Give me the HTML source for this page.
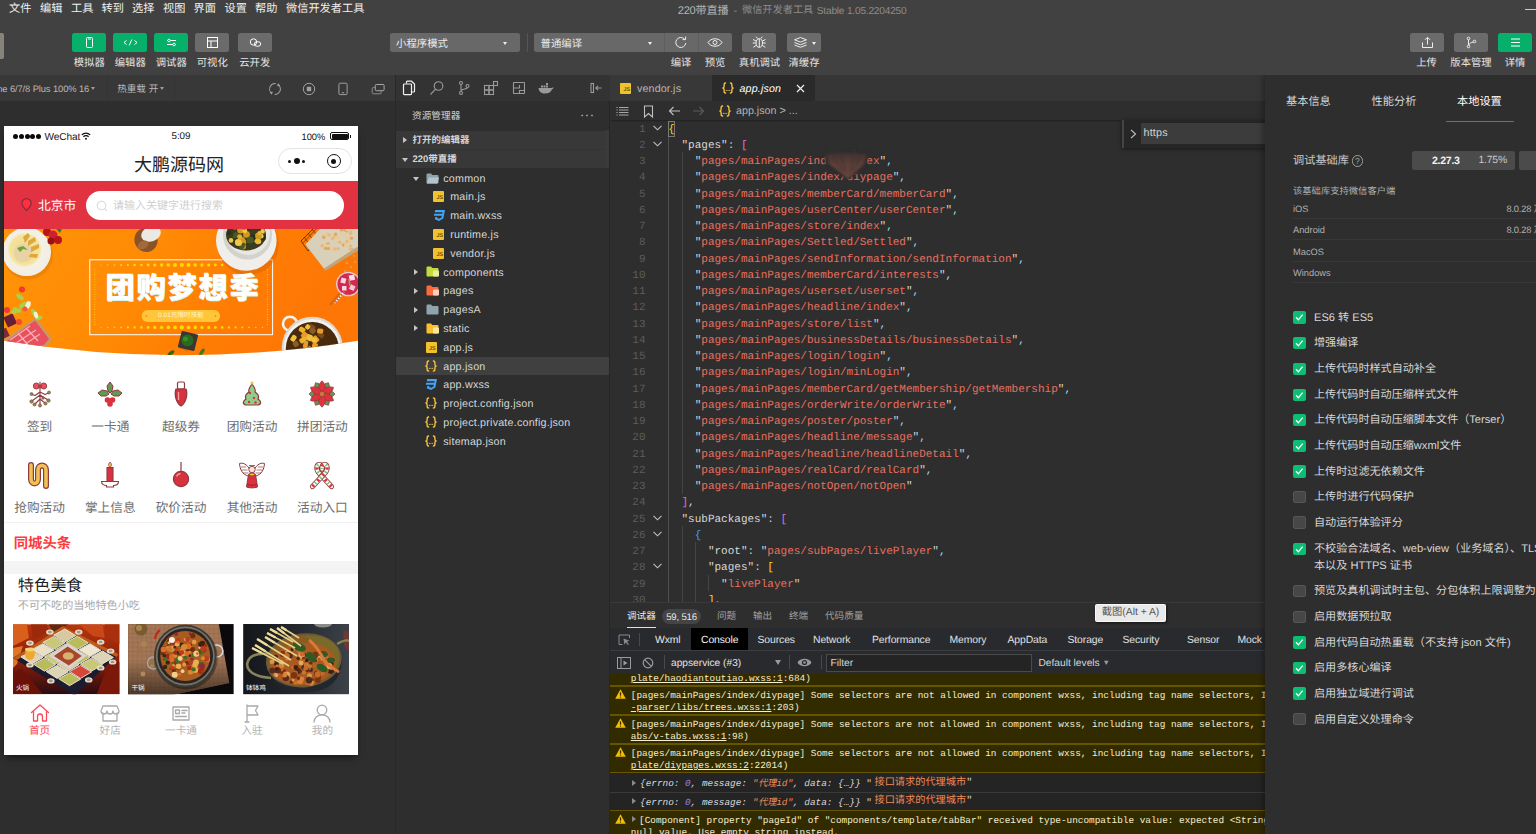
<!DOCTYPE html><html><head><meta charset="utf-8"><title>x</title><style>
*{box-sizing:border-box;margin:0;padding:0}
html,body{width:1536px;height:834px;overflow:hidden;background:#2e2e2e}
body{font-family:"Liberation Sans","Noto Sans CJK SC",sans-serif;color:#ddd;position:relative;font-size:10.4px;text-rendering:geometricPrecision}
.a{position:absolute}
.t{position:absolute;white-space:nowrap;line-height:1}
.mono{font-family:"Liberation Mono",monospace}
#top{left:0;top:0;width:1536px;height:75px;background:#414141}
.menu{top:4.300px;font-size:11.2px;color:#f0f0f0}
.tb{top:33px;height:19px;width:34.2px;border-radius:2.5px;background:#6b6b6b}
.tb.g{background:#07b06a}
.tl{top:58.500px;font-size:10.35px;color:#e6e6e6;text-align:center;width:60px}
svg{position:absolute;overflow:visible}
.cj{font-family:"Liberation Sans","Noto Sans CJK SC",sans-serif}</style></head><body>
<div class="a" id="top"></div>
<div class="t menu" style="left:9px"><span class="cj">文件</span></div>
<div class="t menu" style="left:40px"><span class="cj">编辑</span></div>
<div class="t menu" style="left:71px"><span class="cj">工具</span></div>
<div class="t menu" style="left:101.5px"><span class="cj">转到</span></div>
<div class="t menu" style="left:132px"><span class="cj">选择</span></div>
<div class="t menu" style="left:163px"><span class="cj">视图</span></div>
<div class="t menu" style="left:193.5px"><span class="cj">界面</span></div>
<div class="t menu" style="left:224.5px"><span class="cj">设置</span></div>
<div class="t menu" style="left:255px"><span class="cj">帮助</span></div>
<div class="t menu" style="left:286px"><span class="cj">微信开发者工具</span></div>
<div class="t" style="left:677.800px;top:5.800px;font-size:11.100px;color:#b4b4b4"><span style="letter-spacing:-0.300px">220</span><span class="cj">带直播</span></div>
<div class="t" style="left:733.500px;top:6px;font-size:10.900px;color:#8c8c8c">-</div>
<div class="t" style="left:742px;top:6.400px;font-size:10.200px;color:#8c8c8c"><span class="cj">微信开发者工具</span></div>
<div class="t" style="left:816.800px;top:6.600px;font-size:10.200px;color:#8c8c8c;letter-spacing:-0.230px">Stable 1.05.2204250</div>
<div class="a" style="left:1525px;top:9px;width:11px;height:1px;background:#ccc"></div>
<div class="a" style="left:0;top:33px;width:3.5px;height:26px;background:#85837a;border-radius:0 2px 2px 0"></div>
<div class="a tb g" style="left:72px"></div>
<div class="t tl" style="left:59.25px"><span class="cj">模拟器</span></div>
<div class="a tb g" style="left:113px"></div>
<div class="t tl" style="left:100.25px"><span class="cj">编辑器</span></div>
<div class="a tb g" style="left:154px"></div>
<div class="t tl" style="left:141.25px"><span class="cj">调试器</span></div>
<div class="a tb " style="left:195px"></div>
<div class="t tl" style="left:182.25px"><span class="cj">可视化</span></div>
<div class="a tb " style="left:237.5px"></div>
<div class="t tl" style="left:224.75px"><span class="cj">云开发</span></div>
<svg style="left:72px;top:33px" width="35" height="19" viewBox="0 0 35 19" fill="none" stroke="#fff" stroke-width="1"><rect x="14.5" y="4.5" width="6" height="10" rx="1"></rect><path d="M16 6h3"></path></svg>
<svg style="left:113px;top:33px" width="35" height="19" viewBox="0 0 35 19" fill="none" stroke="#fff" stroke-width="1"><path d="M13.5 7.5l-2.5 2 2.5 2M21.5 7.5l2.5 2-2.5 2M18.8 6.5l-2.6 6"></path></svg>
<svg style="left:154px;top:33px" width="35" height="19" viewBox="0 0 35 19" fill="none" stroke="#fff" stroke-width="1"><path d="M13 7.5h9M13 11.5h9"></path><circle cx="15" cy="7.5" r="1.3" fill="#07b06a"></circle><circle cx="20" cy="11.5" r="1.3" fill="#07b06a"></circle></svg>
<svg style="left:195px;top:33px" width="35" height="19" viewBox="0 0 35 19" fill="none" stroke="#fff" stroke-width="1"><rect x="12.5" y="4.5" width="10" height="10"></rect><path d="M12.5 8h10M16 8v6.5"></path></svg>
<svg style="left:237.5px;top:33px" width="35" height="19" viewBox="0 0 35 19" fill="none" stroke="#fff" stroke-width="1"><circle cx="15.5" cy="9" r="3.2"></circle><ellipse cx="19.5" cy="11" rx="3.3" ry="2.3"></ellipse></svg>
<div class="a" style="left:389.5px;top:33px;width:130px;height:19px;border-radius:2.5px;background:#686868"></div>
<div class="t" style="left:396px;top:39.800px;font-size:10.4px;color:#ececec"><span class="cj">小程序模式</span></div>
<div class="a" style="left:503px;top:42px;border:2.5px solid transparent;border-top:3px solid #eee"></div>
<div class="a" style="left:526.5px;top:33px;width:1px;height:19px;background:#555"></div>
<div class="a" style="left:534px;top:33px;width:198px;height:19px;border-radius:2.5px;background:#686868"></div>
<div class="t" style="left:540.5px;top:39.800px;font-size:10.4px;color:#ececec"><span class="cj">普通编译</span></div>
<div class="a" style="left:647.5px;top:42px;border:2.5px solid transparent;border-top:3px solid #eee"></div>
<div class="a" style="left:664px;top:33px;width:1px;height:19px;background:#5e5e5e"></div>
<div class="a" style="left:698px;top:33px;width:1px;height:19px;background:#5e5e5e"></div>
<svg style="left:664px;top:33px" width="34" height="19" viewBox="0 0 34 19" fill="none" stroke="#eee" stroke-width="1"><path d="M20.6 6.2A5 5 0 1 0 21.8 10"></path><path d="M21.6 3.6v3h-3"></path></svg>
<svg style="left:698px;top:33px" width="34" height="19" viewBox="0 0 34 19" fill="none" stroke="#eee" stroke-width="1"><path d="M10 9.5c3-5 11-5 14 0c-3 5-11 5-14 0z"></path><circle cx="17" cy="9.5" r="2"></circle></svg>
<div class="t tl" style="left:651px"><span class="cj">编译</span></div>
<div class="t tl" style="left:685px"><span class="cj">预览</span></div>
<div class="a tb" style="left:742px"></div>
<svg style="left:742px;top:33px" width="35" height="19" viewBox="0 0 35 19" fill="none" stroke="#eee" stroke-width="1"><ellipse cx="17.3" cy="10" rx="3.2" ry="4.3"></ellipse><path d="M17.3 5.7v8.6M15.5 5.5l-1.3-1.8M19 5.5l1.3-1.8M14 8l-3-1.5M20.5 8l3-1.5M14 10h-3.3M20.5 10h3.3M14.3 12.3l-3 2M20.3 12.3l3 2"></path></svg>
<div class="t tl" style="left:729.5px"><span class="cj">真机调试</span></div>
<div class="a tb" style="left:786.5px"></div>
<svg style="left:786.5px;top:33px" width="35" height="19" viewBox="0 0 35 19" fill="none" stroke="#eee" stroke-width="1"><path d="M13.5 4.5l6 2.3-6 2.3-6-2.3zM7.5 9.5l6 2.3 6-2.3M7.5 12l6 2.3 6-2.3"></path></svg>
<div class="a" style="left:811.5px;top:42px;border:2.5px solid transparent;border-top:3px solid #eee"></div>
<div class="t tl" style="left:774px"><span class="cj">清缓存</span></div>
<div class="a tb" style="left:1409.5px"></div>
<svg style="left:1409.5px;top:33px" width="35" height="19" viewBox="0 0 35 19" fill="none" stroke="#eee" stroke-width="1"><path d="M12.5 9.5v5h10v-5M17.5 11.5v-7M15 6.8l2.5-2.5 2.5 2.5"></path></svg>
<div class="t tl" style="left:1396.5px"><span class="cj">上传</span></div>
<div class="a tb" style="left:1454px"></div>
<svg style="left:1454px;top:33px" width="35" height="19" viewBox="0 0 35 19" fill="none" stroke="#eee" stroke-width="1"><circle cx="14.5" cy="5.5" r="1.3"></circle><circle cx="14.5" cy="13.5" r="1.3"></circle><circle cx="20.5" cy="8.5" r="1.3"></circle><path d="M14.5 6.8v5.4M14.7 12.2c.5-2 2.5-2.6 4.6-3.2"></path></svg>
<div class="t tl" style="left:1441px"><span class="cj">版本管理</span></div>
<div class="a tb g" style="left:1498px"></div>
<svg style="left:1498px;top:33px" width="35" height="19" viewBox="0 0 35 19" fill="none" stroke="#fff" stroke-width="1.2"><path d="M13 6h9M13 9.5h9M13 13h9"></path></svg>
<div class="t tl" style="left:1485px"><span class="cj">详情</span></div>
<div class="a" style="left:0;top:75px;width:395px;height:26px;background:#383838"></div>
<div class="a" style="left:106.5px;top:75px;width:1px;height:26px;background:#343434"></div>
<div class="t" style="left:-2.800px;top:84.500px;font-size:9.350px;color:#b8b8b8;letter-spacing:-0.100px">ne 6/7/8 Plus 100% 16</div>
<div class="a" style="left:91px;top:86.800px;border:2.700px solid transparent;border-top:3.800px solid #9c9c9c;border-bottom:0"></div>
<div class="t" style="left:117.200px;top:84.500px;font-size:9.600px;color:#b8b8b8"><span class="cj">热重载</span> <span class="cj">开</span></div>
<div class="a" style="left:159.500px;top:86.800px;border:2.700px solid transparent;border-top:3.800px solid #9c9c9c;border-bottom:0"></div>
<div class="a" style="left:174px;top:75px;width:1px;height:26px;background:#343434"></div>
<svg style="left:268.300px;top:82.100px" width="14" height="14" viewBox="0 0 14 14" fill="none" stroke="#a0a0a0" stroke-width="1"><circle cx="7" cy="7" r="5.400" stroke-dasharray="14.200 2.760" transform="rotate(-62 7 7)"></circle><path d="M10.600 1.300l1.400 2.700-3 .3z" fill="#a0a0a0" stroke="none"></path><path d="M3.400 12.700l-1.400-2.700 3-.3z" fill="#a0a0a0" stroke="none"></path></svg>
<svg style="left:302.100px;top:82.100px" width="14" height="14" viewBox="0 0 14 14" fill="none" stroke="#a0a0a0" stroke-width="1"><circle cx="7" cy="7" r="5.700"></circle><rect x="4.800" y="4.800" width="4.400" height="4.400" rx="0.800" fill="#a0a0a0" stroke="none"></rect></svg>
<svg style="left:336.400px;top:82px" width="14" height="14" viewBox="0 0 14 14" fill="none" stroke="#a0a0a0" stroke-width="1"><rect x="2.900" y="1.200" width="8.200" height="11.400" rx="1.200"></rect><path d="M5.800 10.700h2.400"></path></svg>
<svg style="left:369.500px;top:82px" width="16" height="14" viewBox="0 0 16 14" fill="none" stroke-width="1"><rect x="5.300" y="2.500" width="8.800" height="6.200" rx="1" stroke="#a8a8a8"></rect><path d="M5.300 5.600H3.200a1 1 0 0 0-1 1v4.200a1 1 0 0 0 1 1h6.900a1 1 0 0 0 1-1V8.700" stroke="#8c8c8c"></path></svg>
<div class="a" id="ph" style="left:4px;top:126px;width:354px;height:629px;background:#fff;box-shadow:0 4px 7px -2px rgba(0,0,0,.55);overflow:hidden;color:#222">
<div class="a" style="left:9.10px;top:8px;width:5.1px;height:5.1px;border-radius:3px;background:#0a0a0a"></div><div class="a" style="left:14.85px;top:8px;width:5.1px;height:5.1px;border-radius:3px;background:#0a0a0a"></div><div class="a" style="left:20.60px;top:8px;width:5.1px;height:5.1px;border-radius:3px;background:#0a0a0a"></div><div class="a" style="left:26.35px;top:8px;width:5.1px;height:5.1px;border-radius:3px;background:#0a0a0a"></div><div class="a" style="left:32.10px;top:8px;width:5.1px;height:5.1px;border-radius:3px;background:#0a0a0a"></div>
<div class="t" style="left:40.600px;top:6.700px;font-size:10.100px;color:#222;letter-spacing:-0.100px">WeChat</div>
<svg style="left:77.300px;top:6px" width="10" height="8" viewBox="0 0 11 9" fill="none" stroke="#111" stroke-width="1.500"><path d="M0.800 3.200a6.600 6.600 0 0 1 9.400 0M2.600 5.300a4 4 0 0 1 5.800 0"></path><circle cx="5.500" cy="7.500" r="1.100" fill="#111" stroke="none"></circle></svg>
<div class="t" style="left:147px;top:6px;width:60px;text-align:center;font-size:9.8px;color:#111">5:09</div>
<div class="t" style="left:297.5px;top:6.500px;font-size:9.3px;color:#111">100%</div>
<div class="a" style="left:326px;top:6px;width:19px;height:8px;border:1px solid #111;border-radius:2px"></div><div class="a" style="left:327.5px;top:7.5px;width:16px;height:5px;background:#111;border-radius:1px"></div><div class="a" style="left:345.5px;top:8.5px;width:1.5px;height:3px;background:#111"></div>
<div class="t" style="left:75px;top:29.800px;width:200px;text-align:center;font-size:18px;color:#222"><span class="cj">大鹏源码网</span></div>
<div class="a" style="left:274px;top:21.5px;width:74px;height:26px;border:1px solid #e3e3e3;border-radius:13.5px"></div>
<div class="a" style="left:284px;top:33.5px;width:3px;height:3px;border-radius:2px;background:#111"></div><div class="a" style="left:289.5px;top:32px;width:6px;height:6px;border-radius:3px;background:#111"></div><div class="a" style="left:298px;top:33.5px;width:3px;height:3px;border-radius:2px;background:#111"></div>
<div class="a" style="left:322.5px;top:28px;width:14px;height:14px;border-radius:7px;border:1.6px solid #111"></div><div class="a" style="left:327px;top:32.5px;width:5px;height:5px;border-radius:3px;background:#111"></div>
<div class="a" style="left:0;top:55.3px;width:354px;height:48px;background:#e23242"></div>
<svg style="left:16.5px;top:71.5px" width="11" height="13" viewBox="0 0 11 13"><path d="M5.5 0.6a4.6 4.6 0 0 1 4.6 4.6c0 3-4.6 7.2-4.6 7.2S0.9 8.2 0.9 5.2A4.6 4.6 0 0 1 5.5 0.6z" fill="#ff3040" stroke="#8a2c3c" stroke-width="1.300"></path></svg>
<div class="t" style="left:34px;top:73.500px;font-size:12.8px;color:#fff"><span class="cj">北京市</span></div>
<div class="a" style="left:82.3px;top:64.6px;width:258px;height:29px;border-radius:14.5px;background:#fff"></div>
<svg style="left:91.5px;top:74px" width="12" height="12" viewBox="0 0 12 12" fill="none" stroke="#d4dae2" stroke-width="1.100"><circle cx="5.5" cy="5.5" r="4.3"></circle><path d="M8.6 8.6l2.3 2.3"></path></svg>
<div class="t" style="left:109px;top:75.200px;font-size:11px;color:#cfcfcf"><span class="cj">请输入关键字进行搜索</span></div>
<svg style="left:0;top:103px" width="354" height="130" viewBox="0 0 354 130"><defs><linearGradient id="bg1" x1="0" y1="0" x2="1" y2="0.25"><stop offset="0" stop-color="#ff9408"></stop><stop offset="0.45" stop-color="#ff8a04"></stop><stop offset="0.75" stop-color="#ff7c04"></stop><stop offset="1" stop-color="#fd7606"></stop></linearGradient><radialGradient id="pl1" cx="0.46" cy="0.46" r="0.5"><stop offset="0" stop-color="#ecd694"></stop><stop offset="0.6" stop-color="#f4e39a"></stop><stop offset="0.72" stop-color="#f4f0e4"></stop><stop offset="1" stop-color="#f1eee6"></stop></radialGradient><clipPath id="bc"><path d="M0 0H354V111.7Q177 140.7 0 111.7Z"></path></clipPath></defs><g clip-path="url(#bc)"><rect width="354" height="130" fill="url(#bg1)"></rect><circle cx="24" cy="25.500" r="25" fill="#e07800" opacity=".5"></circle><circle cx="22.700" cy="22.700" r="24.300" fill="url(#pl1)"></circle><path d="M10 22q2-8 10-7q6 0 8 6q3 6-2 10q-6 4-12 1q-5-4-4-10z" fill="#e9d2a4"></path><path d="M19 8l5-4 2 3-5 7zM24 12l7-4 1 4-8 5zM27 18l8-3 0 4-8 4zM26 25l8 0-1 4-8-1z" fill="#dfa83a"></path><path d="M13 19l6-2 5 4-5-1-3 3z" fill="#6aa53a"></path><circle cx="43" cy="3" r="4" fill="#b8141e"></circle><circle cx="49" cy="6" r="4.500" fill="#d02030"></circle><circle cx="54" cy="11" r="4" fill="#b8141e"></circle><circle cx="47" cy="12" r="3.500" fill="#96101a"></circle><path d="M52 0l6 0-2 4z" fill="#3c7a2a"></path><ellipse cx="142" cy="11" rx="11.500" ry="12" fill="#8a5228" transform="rotate(-30 142 11)"></ellipse><ellipse cx="147" cy="5" rx="10" ry="7.500" fill="#ece8e2" transform="rotate(-20 147 5)"></ellipse><ellipse cx="139" cy="16" rx="6" ry="4" fill="#a06a3a" transform="rotate(-30 139 16)"></ellipse><rect x="85.800" y="30.800" width="182.800" height="74.900" fill="none" stroke="#fff" stroke-width="1"></rect><circle cx="244" cy="15" r="31" fill="#d86400" opacity=".45"></circle><circle cx="242.300" cy="11.400" r="30.300" fill="#f0eeea"></circle><circle cx="243.500" cy="6" r="24.500" fill="#d4d2cc"></circle><circle cx="244" cy="4" r="22" fill="#e8e6e2"></circle><ellipse cx="242" cy="6" rx="20" ry="15.500" fill="#3a3a1e"></ellipse><circle cx="230.9" cy="-2.8" r="3.2" fill="#e8b838"></circle><circle cx="240.9" cy="-7.5" r="1.9" fill="#2a301a"></circle><circle cx="243.5" cy="-1.4" r="1.9" fill="#d09a20"></circle><circle cx="251.3" cy="10.8" r="2.2" fill="#c8a02a"></circle><circle cx="249.2" cy="8.9" r="3.1" fill="#2a301a"></circle><circle cx="238.8" cy="17.2" r="3.2" fill="#d09a20"></circle><circle cx="242.4" cy="1.5" r="2.9" fill="#2a301a"></circle><circle cx="242.5" cy="5.4" r="3.4" fill="#d09a20"></circle><circle cx="244.6" cy="-7.6" r="2.1" fill="#d09a20"></circle><circle cx="237.7" cy="17.4" r="2.8" fill="#4a5a22"></circle><circle cx="236.6" cy="1.1" r="3.5" fill="#d09a20"></circle><circle cx="258.6" cy="2.4" r="2.3" fill="#f0c84a"></circle><circle cx="227.0" cy="11.4" r="2.3" fill="#f0c84a"></circle><circle cx="237.6" cy="14.6" r="1.8" fill="#4a5a22"></circle><circle cx="240.8" cy="1.8" r="2.4" fill="#f0c84a"></circle><circle cx="232.0" cy="5.9" r="2.7" fill="#4a5a22"></circle><circle cx="246.1" cy="10.9" r="3.5" fill="#4a5a22"></circle><circle cx="234.8" cy="11.4" r="2.8" fill="#2a301a"></circle><circle cx="232.9" cy="12.4" r="1.8" fill="#e0b030"></circle><circle cx="238.3" cy="-4.9" r="3.5" fill="#e0b030"></circle><circle cx="242.6" cy="-7.5" r="3.5" fill="#f0c84a"></circle><circle cx="225.0" cy="4.0" r="2.3" fill="#2a301a"></circle><circle cx="254.1" cy="12.1" r="3.2" fill="#e8b838"></circle><circle cx="238.6" cy="13.2" r="3.6" fill="#d09a20"></circle><circle cx="234.4" cy="13.6" r="3.5" fill="#f0c84a"></circle><circle cx="239.6" cy="15.8" r="2.0" fill="#4a5a22"></circle><circle cx="238.9" cy="10.0" r="1.9" fill="#d09a20"></circle><circle cx="240.2" cy="-2.1" r="2.7" fill="#4a5a22"></circle><circle cx="259.1" cy="8.9" r="2.8" fill="#2a301a"></circle><circle cx="257.2" cy="7.2" r="2.4" fill="#f0c84a"></circle><circle cx="230.8" cy="7.3" r="1.9" fill="#4a5a22"></circle><circle cx="254.4" cy="6.9" r="3.3" fill="#d09a20"></circle><circle cx="255.4" cy="3.9" r="2.0" fill="#e8b838"></circle><circle cx="235.7" cy="7.8" r="2.5" fill="#e0b030"></circle><path d="M297 12L311 -2L325 -2L304 22Z" fill="none" stroke="#4a2a0a" stroke-width="0.800"></path><path d="M299 14l14-15M302 17l15-17M300 8l6 8M304 4l6 8M308 0l6 8" stroke="#4a2a0a" stroke-width="0.600"></path><path d="M301.400 15.400L316.800 -1L355 -1L355 17L320 39.700Z" fill="#d9d0ba"></path><path d="M320 39.700L355 17L355 21L321 42Z" fill="#b8a888"></path><circle cx="332.8" cy="8.2" r="1.700" fill="#e8b878"></circle><circle cx="324.0" cy="14.9" r="1.700" fill="#dca862"></circle><circle cx="334.1" cy="19.8" r="1.700" fill="#e8b878"></circle><circle cx="328.7" cy="20.6" r="1.700" fill="#f0c890"></circle><circle cx="319.3" cy="8.3" r="1.700" fill="#f0c890"></circle><circle cx="348.3" cy="20.9" r="1.700" fill="#dca862"></circle><circle cx="323.0" cy="5.2" r="1.700" fill="#e8b878"></circle><circle cx="322.2" cy="19.2" r="1.700" fill="#f0c890"></circle><circle cx="320.0" cy="15.1" r="1.700" fill="#f0c890"></circle><circle cx="346.4" cy="20.2" r="1.700" fill="#e8b878"></circle><circle cx="339.6" cy="16.0" r="1.700" fill="#dca862"></circle><circle cx="346.5" cy="17.0" r="1.700" fill="#e8b878"></circle><circle cx="330.7" cy="7.5" r="1.700" fill="#e8b878"></circle><circle cx="324.4" cy="19.5" r="1.700" fill="#dca862"></circle><circle cx="319.8" cy="8.3" r="1.700" fill="#dca862"></circle><circle cx="322.5" cy="5.2" r="1.700" fill="#f0c890"></circle><circle cx="347.0" cy="2.5" r="1.700" fill="#f0c890"></circle><circle cx="318.1" cy="16.8" r="1.700" fill="#e8b878"></circle><circle cx="346.6" cy="4.5" r="1.700" fill="#e8b878"></circle><circle cx="346.6" cy="2.9" r="1.700" fill="#e8b878"></circle><circle cx="334.0" cy="12.6" r="1.700" fill="#f0c890"></circle><circle cx="347.5" cy="9.2" r="1.700" fill="#dca862"></circle><circle cx="324.1" cy="16.8" r="1.700" fill="#f0c890"></circle><circle cx="336.6" cy="3.8" r="1.700" fill="#f0c890"></circle><circle cx="341.0" cy="0.9" r="1.700" fill="#dca862"></circle><circle cx="335.8" cy="13.3" r="1.700" fill="#e8b878"></circle><circle cx="341.8" cy="16.2" r="1.700" fill="#f0c890"></circle><circle cx="349.9" cy="2.7" r="1.700" fill="#f0c890"></circle><circle cx="330.9" cy="19.9" r="1.700" fill="#e8b878"></circle><circle cx="337.6" cy="0.9" r="1.700" fill="#dca862"></circle><circle cx="345.1" cy="11.5" r="1.700" fill="#f0c890"></circle><circle cx="342.8" cy="1.9" r="1.700" fill="#dca862"></circle><circle cx="321.5" cy="19.4" r="1.700" fill="#dca862"></circle><circle cx="332.4" cy="8.8" r="1.700" fill="#f0c890"></circle><circle cx="341.9" cy="8.3" r="1.700" fill="#f0c890"></circle><circle cx="328.5" cy="9.5" r="1.700" fill="#e8b878"></circle><circle cx="325.1" cy="5.9" r="1.700" fill="#e8b878"></circle><circle cx="327.8" cy="6.3" r="1.700" fill="#f0c890"></circle><circle cx="343.1" cy="0.6" r="1.700" fill="#f0c890"></circle><circle cx="343.8" cy="10.9" r="1.700" fill="#f0c890"></circle><circle cx="342.9" cy="12.5" r="1.700" fill="#e8b878"></circle><circle cx="331.6" cy="5.1" r="1.700" fill="#dca862"></circle><circle cx="338" cy="30" r="1.300" fill="#e0983a"></circle><circle cx="343" cy="34" r="1.300" fill="#e0983a"></circle><circle cx="350" cy="27" r="1.300" fill="#e0983a"></circle><circle cx="347" cy="38" r="1.300" fill="#e0983a"></circle><circle cx="341" cy="42" r="1.300" fill="#e0983a"></circle><circle cx="351" cy="33" r="1.300" fill="#e0983a"></circle><path d="M336 64l-10 12" stroke="#c05a10" stroke-width="2" opacity=".5"></path><circle cx="344.300" cy="55" r="12.300" fill="#e8c8cc"></circle><circle cx="344.300" cy="55" r="10.800" fill="#d42850"></circle><rect x="337" y="49" width="5" height="5" fill="#f6d8de" transform="rotate(15 339 51)"></rect><rect x="345" y="46" width="5.500" height="5.500" fill="#f8e0e4" transform="rotate(-10 347 48)"></rect><rect x="346" y="56" width="5" height="5" fill="#f2c8d0" transform="rotate(25 348 58)"></rect><rect x="338" y="57" width="4.500" height="4.500" fill="#f6d8de"></rect><path d="M345 50l1 7" stroke="#8ab83a" stroke-width="1.500"></path><path d="M340 63l-9 11" stroke="#fff" stroke-width="1.800"></path><path d="M340 63l-9 11" stroke="#e03040" stroke-width="1.800" stroke-dasharray="1.500 1.500"></path><circle cx="286" cy="94.700" r="7" fill="none" stroke="#f4f2ee" stroke-width="2.600"></circle><circle cx="308.300" cy="118.200" r="30.500" fill="#dcd8d0"></circle><circle cx="308.300" cy="118.500" r="28.500" fill="#f4f2ee"></circle><circle cx="308.300" cy="119.500" r="26.500" fill="#4a2a0c"></circle><rect x="304.0" y="124.2" width="6.6" height="7.0" rx="1.500" fill="#6a3a14" transform="rotate(39 307.0 127.2)"></rect><rect x="294.7" y="98.1" width="6.4" height="5.1" rx="1.500" fill="#f0b02a" transform="rotate(32 297.7 101.1)"></rect><rect x="307.7" y="119.5" width="5.8" height="7.0" rx="1.500" fill="#e8801a" transform="rotate(60 310.7 122.5)"></rect><rect x="308.2" y="107.0" width="6.9" height="7.2" rx="1.500" fill="#e89a2a" transform="rotate(50 311.2 110.0)"></rect><rect x="304.3" y="95.4" width="6.9" height="5.3" rx="1.500" fill="#7a4a1e" transform="rotate(29 307.3 98.4)"></rect><rect x="305.5" y="99.0" width="5.8" height="5.6" rx="1.500" fill="#8a5a2a" transform="rotate(38 308.5 102.0)"></rect><rect x="297.7" y="103.2" width="6.3" height="6.4" rx="1.500" fill="#e89a2a" transform="rotate(41 300.7 106.2)"></rect><rect x="287.1" y="106.4" width="4.9" height="6.5" rx="1.500" fill="#f0c03a" transform="rotate(32 290.1 109.4)"></rect><rect x="302.5" y="117.5" width="5.6" height="5.6" rx="1.500" fill="#e89a2a" transform="rotate(36 305.5 120.5)"></rect><rect x="298.7" y="114.5" width="6.0" height="5.2" rx="1.500" fill="#7a4a1e" transform="rotate(53 301.7 117.5)"></rect><rect x="302.6" y="105.5" width="5.8" height="6.4" rx="1.500" fill="#f0c03a" transform="rotate(23 305.6 108.5)"></rect><rect x="300.9" y="95.8" width="4.6" height="4.9" rx="1.500" fill="#f0c03a" transform="rotate(38 303.9 98.8)"></rect><rect x="312.6" y="119.7" width="7.1" height="7.2" rx="1.500" fill="#5a2e0e" transform="rotate(12 315.6 122.7)"></rect><rect x="313.2" y="103.2" width="6.6" height="4.9" rx="1.500" fill="#7a4a1e" transform="rotate(43 316.2 106.2)"></rect><rect x="309.1" y="123.2" width="6.2" height="6.3" rx="1.500" fill="#5a2e0e" transform="rotate(35 312.1 126.2)"></rect><rect x="296.5" y="108.1" width="5.1" height="6.9" rx="1.500" fill="#f0b02a" transform="rotate(54 299.5 111.1)"></rect><rect x="312.2" y="120.1" width="6.3" height="6.9" rx="1.500" fill="#e8801a" transform="rotate(58 315.2 123.1)"></rect><rect x="313.1" y="99.6" width="6.1" height="4.9" rx="1.500" fill="#e89a2a" transform="rotate(7 316.1 102.6)"></rect><rect x="301.4" y="118.9" width="6.3" height="4.7" rx="1.500" fill="#f0c03a" transform="rotate(31 304.4 121.9)"></rect><rect x="307.5" y="108.6" width="5.5" height="5.0" rx="1.500" fill="#f0c03a" transform="rotate(13 310.5 111.6)"></rect><rect x="310.2" y="124.8" width="5.6" height="6.6" rx="1.500" fill="#6a3a14" transform="rotate(44 313.2 127.8)"></rect><rect x="304.1" y="124.2" width="7.0" height="5.3" rx="1.500" fill="#7a4a1e" transform="rotate(21 307.1 127.2)"></rect><rect x="305.4" y="119.6" width="5.1" height="5.6" rx="1.500" fill="#e8801a" transform="rotate(19 308.4 122.6)"></rect><rect x="299.4" y="112.0" width="4.6" height="7.3" rx="1.500" fill="#e89a2a" transform="rotate(11 302.4 115.0)"></rect><rect x="288.7" y="112.4" width="5.5" height="5.4" rx="1.500" fill="#8a5a2a" transform="rotate(57 291.7 115.4)"></rect><rect x="308.0" y="113.9" width="5.6" height="5.0" rx="1.500" fill="#e89a2a" transform="rotate(18 311.0 116.9)"></rect><path d="M-1 112L31.600 88.500L48 110L42 118L-1 126Z" fill="#c49a6a"></path><path d="M0 114L31 91.500L45 110L40 116L0 124Z" fill="#e8505e"></path><g stroke="#f6b0b4" stroke-width="1.300" fill="none"><path d="M6 111l20-14M12 114l20-13M20 116l16-11M14 104l10 12M22 99l12 13"></path></g><rect x="1" y="86" width="10" height="11" fill="#6a1e36" transform="rotate(-25 6 91)"></rect><rect x="-3" y="100" width="7" height="9" fill="#7a2a3a" transform="rotate(-25 0 104)"></rect><g fill="#a8d048"><ellipse cx="16" cy="68" rx="4.500" ry="2.300" transform="rotate(40 16 68)"></ellipse><ellipse cx="19" cy="76" rx="4.500" ry="2.200" transform="rotate(-40 19 76)"></ellipse><ellipse cx="13" cy="81" rx="4.500" ry="2.200" transform="rotate(20 13 81)"></ellipse><ellipse cx="30" cy="84" rx="4.500" ry="2.200" transform="rotate(60 30 84)"></ellipse><ellipse cx="35" cy="89" rx="3.500" ry="2" transform="rotate(-20 35 89)"></ellipse><ellipse cx="10" cy="83" rx="3" ry="2"></ellipse></g><g fill="#eef4d8"><ellipse cx="24" cy="76" rx="2.500" ry="4" transform="rotate(20 24 76)"></ellipse><ellipse cx="32" cy="86" rx="2" ry="3.500" transform="rotate(-20 32 86)"></ellipse></g><circle cx="18" cy="60.500" r="3" fill="#f03a2a"></circle><circle cx="3" cy="81" r="3" fill="#e83a3a"></circle><circle cx="21" cy="80" r="2.500" fill="#f05a4a"></circle><circle cx="15" cy="93" r="3" fill="#f04a3a"></circle><path d="M184 121l-8-3" stroke="#c05a00" stroke-width="3" opacity=".4"></path><rect x="175.500" y="103.500" width="17" height="17" rx="1" fill="#3a3632" transform="rotate(14 184 112)"></rect><circle cx="183.500" cy="111.500" r="6" fill="#2a6a1e"></circle><circle cx="181.500" cy="110" r="2.500" fill="#3c8a2a"></circle><ellipse cx="167" cy="124" rx="4" ry="1.800" fill="#2c6a1c" transform="rotate(-35 167 124)"></ellipse><ellipse cx="198" cy="123" rx="4" ry="1.800" fill="#3c7a22" transform="rotate(-55 198 123)"></ellipse><circle cx="97.0" cy="36" r="0.55" fill="#ffdc00"></circle><circle cx="103.7" cy="36" r="0.68" fill="#ffdc00"></circle><circle cx="110.5" cy="36" r="0.80" fill="#ffdc00"></circle><circle cx="117.2" cy="36" r="0.93" fill="#ffdc00"></circle><circle cx="123.9" cy="36" r="1.05" fill="#ffdc00"></circle><circle cx="130.6" cy="36" r="1.18" fill="#ffdc00"></circle><circle cx="137.4" cy="36" r="1.30" fill="#ffdc00"></circle><circle cx="144.1" cy="36" r="1.42" fill="#ffdc00"></circle><circle cx="150.8" cy="36" r="1.55" fill="#ffdc00"></circle><circle cx="157.6" cy="36" r="1.68" fill="#ffdc00"></circle><circle cx="164.3" cy="36" r="1.80" fill="#ffdc00"></circle><circle cx="171.0" cy="36" r="1.93" fill="#ffdc00"></circle><circle cx="177.8" cy="36" r="2.05" fill="#ffdc00"></circle><circle cx="184.5" cy="36" r="1.93" fill="#ffdc00"></circle><circle cx="191.2" cy="36" r="1.80" fill="#ffdc00"></circle><circle cx="197.9" cy="36" r="1.68" fill="#ffdc00"></circle><circle cx="204.7" cy="36" r="1.55" fill="#ffdc00"></circle><circle cx="211.4" cy="36" r="1.42" fill="#ffdc00"></circle><circle cx="218.1" cy="36" r="1.30" fill="#ffdc00"></circle><circle cx="97.0" cy="98.4" r="0.55" fill="#ffdc00"></circle><circle cx="103.7" cy="98.4" r="0.68" fill="#ffdc00"></circle><circle cx="110.5" cy="98.4" r="0.80" fill="#ffdc00"></circle><circle cx="117.2" cy="98.4" r="0.93" fill="#ffdc00"></circle><circle cx="123.9" cy="98.4" r="1.05" fill="#ffdc00"></circle><circle cx="130.6" cy="98.4" r="1.18" fill="#ffdc00"></circle><circle cx="137.4" cy="98.4" r="1.30" fill="#ffdc00"></circle><circle cx="144.1" cy="98.4" r="1.42" fill="#ffdc00"></circle><circle cx="150.8" cy="98.4" r="1.55" fill="#ffdc00"></circle><circle cx="157.6" cy="98.4" r="1.68" fill="#ffdc00"></circle><circle cx="164.3" cy="98.4" r="1.80" fill="#ffdc00"></circle><circle cx="171.0" cy="98.4" r="1.93" fill="#ffdc00"></circle><circle cx="177.8" cy="98.4" r="2.05" fill="#ffdc00"></circle><circle cx="184.5" cy="98.4" r="1.93" fill="#ffdc00"></circle><circle cx="191.2" cy="98.4" r="1.80" fill="#ffdc00"></circle><circle cx="197.9" cy="98.4" r="1.68" fill="#ffdc00"></circle><circle cx="204.7" cy="98.4" r="1.55" fill="#ffdc00"></circle><circle cx="211.4" cy="98.4" r="1.42" fill="#ffdc00"></circle><circle cx="218.1" cy="98.4" r="1.30" fill="#ffdc00"></circle><circle cx="224.9" cy="98.4" r="1.18" fill="#ffdc00"></circle><circle cx="231.6" cy="98.4" r="1.05" fill="#ffdc00"></circle><circle cx="238.3" cy="98.4" r="0.93" fill="#ffdc00"></circle><circle cx="245.0" cy="98.4" r="0.80" fill="#ffdc00"></circle><circle cx="251.8" cy="98.4" r="0.68" fill="#ffdc00"></circle><circle cx="258.5" cy="98.4" r="0.55" fill="#ffdc00"></circle><path d="M90.700 40V97M263.400 40V97" stroke="#ffc800" stroke-width="1" stroke-dasharray="1 1.500"></path><rect x="137.600" y="81" width="78.400" height="12" rx="6" fill="#ffc63a"></rect><circle cx="142.500" cy="87" r="0.900" fill="#ff8a1a"></circle><circle cx="211.500" cy="87" r="0.900" fill="#ff8a1a"></circle></g></svg><div class="t" style="left:77px;top:147.500px;width:202px;text-align:center;font-size:29.500px;font-weight:900;color:#fff;text-shadow:0.800px 1.200px 0 #d8f4ec;letter-spacing:1.500px;padding-left:1.500px"><span class="cj">团购梦想季</span></div><div class="t" style="left:127px;top:187px;width:100px;text-align:center;font-size:6.600px;color:#fff4d0">0.01<span class="cj">元限时技能</span></div>
<div class="t" style="left:-4.399999999999999px;top:295.300px;width:80px;text-align:center;font-size:12.700px;color:#6e6e6e"><span class="cj">签到</span></div><div class="t" style="left:66.3px;top:295.300px;width:80px;text-align:center;font-size:12.700px;color:#6e6e6e"><span class="cj">一卡通</span></div><div class="t" style="left:137px;top:295.300px;width:80px;text-align:center;font-size:12.700px;color:#6e6e6e"><span class="cj">超级券</span></div><div class="t" style="left:208px;top:295.300px;width:80px;text-align:center;font-size:12.700px;color:#6e6e6e"><span class="cj">团购活动</span></div><div class="t" style="left:278.4px;top:295.300px;width:80px;text-align:center;font-size:12.700px;color:#6e6e6e"><span class="cj">拼团活动</span></div><div class="t" style="left:-4.399999999999999px;top:376.300px;width:80px;text-align:center;font-size:12.700px;color:#6e6e6e"><span class="cj">抢购活动</span></div><div class="t" style="left:66.3px;top:376.300px;width:80px;text-align:center;font-size:12.700px;color:#6e6e6e"><span class="cj">掌上信息</span></div><div class="t" style="left:137px;top:376.300px;width:80px;text-align:center;font-size:12.700px;color:#6e6e6e"><span class="cj">砍价活动</span></div><div class="t" style="left:208px;top:376.300px;width:80px;text-align:center;font-size:12.700px;color:#6e6e6e"><span class="cj">其他活动</span></div><div class="t" style="left:278.4px;top:376.300px;width:80px;text-align:center;font-size:12.700px;color:#6e6e6e"><span class="cj">活动入口</span></div><svg style="left:21.6px;top:254px" width="28" height="28" viewBox="0 0 28 28"><path d="M14 2v23M14 12l-5 3.500M14 12l5 2.500M14 15l-8 6M14 15l8 5M14 19l-5 5M14 19l5 4M9 15.500l-3 -1M19 14.500l3.500 -1.500" stroke="#8e3a3e" stroke-width="1.100" fill="none" stroke-linecap="round"></path><circle cx="10.300" cy="6" r="3" fill="#e8505e" stroke="#8e3a3e" stroke-width=".9"></circle><circle cx="17.700" cy="6" r="3" fill="#e8505e" stroke="#8e3a3e" stroke-width=".9"></circle><circle cx="14" cy="6.500" r="1.500" fill="#d8323e" stroke="#8e3a3e" stroke-width=".7"></circle><g fill="#6f9a4e" stroke="#8e3a3e" stroke-width=".6"><circle cx="5.500" cy="21.500" r="1.700"></circle><circle cx="22.500" cy="20.500" r="1.700"></circle><circle cx="8.500" cy="24.500" r="1.600"></circle><circle cx="19.500" cy="23.500" r="1.600"></circle><circle cx="14" cy="25.500" r="1.600"></circle><circle cx="5.500" cy="14" r="1.500"></circle><circle cx="23" cy="12.500" r="1.500"></circle><circle cx="17" cy="18" r="1.300"></circle></g></svg><svg style="left:92.3px;top:254px" width="28" height="28" viewBox="0 0 28 28"><path d="M14 2l3 4-1 5-2 2-2-2-1-5zM2 13l4-3 5 1 2 3-3 2-5 0zM26 13l-4-3-5 1-2 3 3 2 5 0z" fill="#5f9a52" stroke="#8e3a3e" stroke-width="1"></path><circle cx="11.5" cy="20" r="2.8" fill="#d8323e"></circle><circle cx="16.5" cy="20" r="2.8" fill="#d8323e"></circle><circle cx="14" cy="24" r="2.8" fill="#d8323e"></circle></svg><svg style="left:163px;top:254px" width="28" height="28" viewBox="0 0 28 28"><rect x="10.5" y="2" width="7" height="7" rx="1.5" fill="#fff" stroke="#8e3a3e" stroke-width="1.2"></rect><path d="M9 9h10c2 5 0 14-5 17c-5-3-7-12-5-17z" fill="#d8323e" stroke="#8e3a3e" stroke-width="1.2"></path><path d="M11.5 12v8" stroke="#f9a0a6" stroke-width="1.3"></path></svg><svg style="left:234px;top:254px" width="28" height="28" viewBox="0 0 28 28"><path d="M14 4c3 4 4 6 3 8c3 2 4 5 3 7c3 2 4 5 0 6H8c-4-1-3-4 0-6c-1-2 0-5 3-7c-1-2 0-4 3-8z" fill="#8fce8a" stroke="#8e3a3e" stroke-width="1.2"></path><circle cx="14" cy="3" r="1.5" fill="#f2c13a"></circle><circle cx="12" cy="13" r="1.2" fill="#d8323e"></circle><circle cx="16" cy="18" r="1.2" fill="#d8323e"></circle><circle cx="11" cy="22" r="1.2" fill="#d8323e"></circle><circle cx="17.5" cy="22.5" r="1.2" fill="#d8323e"></circle></svg><svg style="left:304.4px;top:254px" width="28" height="28" viewBox="0 0 28 28"><path d="M14 14L11.500 3.500l2.500-2.500 2.500 2.500z" transform="rotate(30 14 14)" fill="#5f9a52" stroke="#8e3a3e" stroke-width="0.700"></path><path d="M14 14L11.500 3.500l2.500-2.500 2.500 2.500z" transform="rotate(90 14 14)" fill="#5f9a52" stroke="#8e3a3e" stroke-width="0.700"></path><path d="M14 14L11.500 3.500l2.500-2.500 2.500 2.500z" transform="rotate(150 14 14)" fill="#5f9a52" stroke="#8e3a3e" stroke-width="0.700"></path><path d="M14 14L11.500 3.500l2.500-2.500 2.500 2.500z" transform="rotate(210 14 14)" fill="#5f9a52" stroke="#8e3a3e" stroke-width="0.700"></path><path d="M14 14L11.500 3.500l2.500-2.500 2.500 2.500z" transform="rotate(270 14 14)" fill="#5f9a52" stroke="#8e3a3e" stroke-width="0.700"></path><path d="M14 14L11.500 3.500l2.500-2.500 2.500 2.500z" transform="rotate(330 14 14)" fill="#5f9a52" stroke="#8e3a3e" stroke-width="0.700"></path><path d="M14 14C9.500 11 9.500 5 14 0.800C18.500 5 18.500 11 14 14z" transform="rotate(0 14 14)" fill="#e2323e" stroke="#8e3a3e" stroke-width="0.800"></path><path d="M14 14C9.500 11 9.500 5 14 0.800C18.500 5 18.500 11 14 14z" transform="rotate(60 14 14)" fill="#e2323e" stroke="#8e3a3e" stroke-width="0.800"></path><path d="M14 14C9.500 11 9.500 5 14 0.800C18.500 5 18.500 11 14 14z" transform="rotate(120 14 14)" fill="#e2323e" stroke="#8e3a3e" stroke-width="0.800"></path><path d="M14 14C9.500 11 9.500 5 14 0.800C18.500 5 18.500 11 14 14z" transform="rotate(180 14 14)" fill="#e2323e" stroke="#8e3a3e" stroke-width="0.800"></path><path d="M14 14C9.500 11 9.500 5 14 0.800C18.500 5 18.500 11 14 14z" transform="rotate(240 14 14)" fill="#e2323e" stroke="#8e3a3e" stroke-width="0.800"></path><path d="M14 14C9.500 11 9.500 5 14 0.800C18.500 5 18.500 11 14 14z" transform="rotate(300 14 14)" fill="#e2323e" stroke="#8e3a3e" stroke-width="0.800"></path><circle cx="14" cy="14" r="2.800" fill="#c8783a" stroke="#8e3a3e" stroke-width=".7"></circle></svg><svg style="left:21.6px;top:335px" width="28" height="28" viewBox="0 0 28 28"><path d="M5 4v14c0 6 7 6 7 0V9c0-6 8-6 8 0v16" fill="none" stroke="#8e3a3e" stroke-width="6" stroke-linecap="round"></path><path d="M5 4v14c0 6 7 6 7 0V9c0-6 8-6 8 0v16" fill="none" stroke="#f0c256" stroke-width="3.6" stroke-linecap="round"></path></svg><svg style="left:92.3px;top:335px" width="28" height="28" viewBox="0 0 28 28"><path d="M14 1c2 2 2 4 0 5c-2-1-2-3 0-5z" fill="#f2c13a" stroke="#8e3a3e" stroke-width=".8"></path><rect x="11" y="6.5" width="6" height="14" fill="#d8323e" stroke="#8e3a3e" stroke-width="1.1"></rect><path d="M5.5 20.5h17c0 3-3 4-5 4v1.5h-7V24.5c-2 0-5-1-5-4z" fill="#fff" stroke="#8e3a3e" stroke-width="1.1"></path></svg><svg style="left:163px;top:335px" width="28" height="28" viewBox="0 0 28 28"><path d="M14 1v10" stroke="#8e3a3e" stroke-width="1.2"></path><circle cx="14" cy="18" r="7.6" fill="#d8323e" stroke="#8e3a3e" stroke-width="1.2"></circle><path d="M9.5 15.5a5 5 0 0 1 4-3" stroke="#f9a0a6" stroke-width="1.3" fill="none"></path></svg><svg style="left:234px;top:335px" width="28" height="28" viewBox="0 0 28 28"><path d="M11.500 15C7 15 2 11 1.500 2.500C6 1 11 5 12.500 11zM16.500 15c4.500 0 9.500-4 10-12.500C22 1 17 5 15.500 11z" fill="#fff" stroke="#8e3a3e" stroke-width="1"></path><path d="M3 6h5M3.500 9h6M5 12h5.500M25 6h-5M24.500 9h-6M23 12h-5.500" stroke="#8e3a3e" stroke-width=".7"></path><circle cx="14" cy="8.500" r="3.200" fill="#fbe3d8" stroke="#8e3a3e" stroke-width=".9"></circle><path d="M11 4.500h6" stroke="#8e3a3e" stroke-width=".8"></path><path d="M10.500 13.500c2-1.500 5-1.500 7 0l2 12.500c-3 1.200-8 1.200-11 0z" fill="#d8323e" stroke="#8e3a3e" stroke-width="1"></path><ellipse cx="14" cy="13.500" rx="2.600" ry="1.400" fill="#f2c13a" stroke="#8e3a3e" stroke-width=".7"></ellipse><path d="M9 23.500c3 1 7 1 10 0" stroke="#a81c28" stroke-width="1" fill="none"></path></svg><svg style="left:304.4px;top:335px" width="28" height="28" viewBox="0 0 28 28"><path d="M23.500 25.500L11.500 12.500C7.500 8.500 8.500 3.500 11.500 3.500C13.500 3.500 14 6 14 8" fill="none" stroke="#8e3a3e" stroke-width="5.200" stroke-linecap="round"></path><path d="M23.500 25.500L11.500 12.500C7.500 8.500 8.500 3.500 11.500 3.500C13.500 3.500 14 6 14 8" fill="none" stroke="#fff" stroke-width="3.400" stroke-linecap="round"></path><path d="M23.500 25.500L11.500 12.500C7.500 8.500 8.500 3.500 11.500 3.500C13.500 3.500 14 6 14 8" fill="none" stroke="#d8323e" stroke-width="3.400" stroke-dasharray="2.200 5.200"></path><path d="M23.500 25.500L11.500 12.500C7.500 8.500 8.500 3.500 11.500 3.500C13.500 3.500 14 6 14 8" fill="none" stroke="#7fc06a" stroke-width="3.400" stroke-dasharray="1.600 5.800" stroke-dashoffset="-3.800"></path><path d="M4.500 25.500L16.500 12.500C20.500 8.500 19.500 3.500 16.500 3.500C14.500 3.500 14 6 14 8" fill="none" stroke="#8e3a3e" stroke-width="5.200" stroke-linecap="round"></path><path d="M4.500 25.500L16.500 12.500C20.500 8.500 19.500 3.500 16.500 3.500C14.500 3.500 14 6 14 8" fill="none" stroke="#fff" stroke-width="3.400" stroke-linecap="round"></path><path d="M4.500 25.500L16.500 12.500C20.500 8.500 19.500 3.500 16.500 3.500C14.500 3.500 14 6 14 8" fill="none" stroke="#d8323e" stroke-width="3.400" stroke-dasharray="2.200 5.200"></path><path d="M4.500 25.500L16.500 12.500C20.500 8.500 19.500 3.500 16.500 3.500C14.500 3.500 14 6 14 8" fill="none" stroke="#7fc06a" stroke-width="3.400" stroke-dasharray="1.600 5.800" stroke-dashoffset="-3.800"></path></svg><div class="a" style="left:0;top:396px;width:354px;height:1px;background:#f0f0f0"></div><div class="t" style="left:9.7px;top:410.800px;font-size:14.4px;font-weight:bold;color:#fd3a3c"><span class="cj">同城头条</span></div><div class="a" style="left:0;top:434.6px;width:354px;height:13.4px;background:#f4f4f4"></div><div class="t" style="left:13.8px;top:452px;font-size:16.2px;color:#222"><span class="cj">特色美食</span></div><div class="t" style="left:13.8px;top:475.300px;font-size:11.1px;color:#a8a8a8"><span class="cj">不可不吃的当地特色小吃</span></div>
<svg style="left:8.9px;top:498px" width="106.600" height="70.400" viewBox="0 0 107 70.400"><defs><clipPath id="c1"><rect width="107" height="70.400"></rect></clipPath><linearGradient id="p1g" x1="0" y1="0" x2="0" y2="1"><stop offset="0" stop-color="#b8360c"></stop><stop offset="0.55" stop-color="#8a1c0a"></stop><stop offset="1" stop-color="#2a0c12"></stop></linearGradient></defs><g clip-path="url(#c1)"><rect width="107" height="70.400" fill="url(#p1g)"></rect><path d="M0 0H14L16 14L0 22Z" fill="#d8601a"></path><path d="M18 0H34L36 8L20 16Z" fill="#9a2a0a"></path><path d="M36 0H56L40 8Z" fill="#5a2a12"></path><path d="M66 0H90L92 14L80 12Z" fill="#c8481a"></path><path d="M92 0H107V20L94 14Z" fill="#a8300c"></path><path d="M0 24L10 22L4 40L0 44Z" fill="#e07820"></path><path d="M0 50L8 44L30 70.400H0Z" fill="#6a1208"></path><path d="M107 38L98 34L84 70.400H107Z" fill="#7a180a"></path><path d="M50 2L106 30L62 72L0 34Z" fill="#1c1c2e"></path><path d="M50 2L106 30L104 33L50 6L4 36L0 34Z" fill="#c05a1a"></path><path d="M52.0 5.0L63.0 11.5L52.0 18.0L41.0 11.0Z" fill="#d8c8a0" stroke="#f0e8d8" stroke-width="0.900"></path><path d="M64.6 12.3L75.6 18.8L64.6 25.3L53.6 18.3Z" fill="#b8bc5a" stroke="#f0e8d8" stroke-width="0.900"></path><path d="M77.2 19.6L88.2 26.1L77.2 32.6L66.2 25.6Z" fill="#efe6d0" stroke="#f0e8d8" stroke-width="0.900"></path><path d="M89.8 26.9L100.8 33.4L89.8 39.9L78.8 32.9Z" fill="#dcd4b4" stroke="#f0e8d8" stroke-width="0.900"></path><path d="M41.0 12.3L52.0 18.8L41.0 25.3L30.0 18.3Z" fill="#c8c878" stroke="#f0e8d8" stroke-width="0.900"></path><path d="M53.6 19.6L64.6 26.1L53.6 32.6L42.6 25.6Z" fill="#c8a868" stroke="#f0e8d8" stroke-width="0.900"></path><path d="M66.2 26.9L77.2 33.4L66.2 39.9L55.2 32.9Z" fill="#b8bc5a" stroke="#f0e8d8" stroke-width="0.900"></path><path d="M78.8 34.2L89.8 40.7L78.8 47.2L67.8 40.2Z" fill="#c8c878" stroke="#f0e8d8" stroke-width="0.900"></path><path d="M30.0 19.6L41.0 26.1L30.0 32.6L19.0 25.6Z" fill="#eadfc4" stroke="#f0e8d8" stroke-width="0.900"></path><path d="M42.6 26.9L53.6 33.4L42.6 39.9L31.6 32.9Z" fill="#c8c878" stroke="#f0e8d8" stroke-width="0.900"></path><path d="M55.2 34.2L66.2 40.7L55.2 47.2L44.2 40.2Z" fill="#d8c8a0" stroke="#f0e8d8" stroke-width="0.900"></path><path d="M67.8 41.5L78.8 48.0L67.8 54.5L56.8 47.5Z" fill="#d8463a" stroke="#f0e8d8" stroke-width="0.900"></path><path d="M19.0 26.9L30.0 33.4L19.0 39.9L8.0 32.9Z" fill="#dcd4b4" stroke="#f0e8d8" stroke-width="0.900"></path><path d="M31.6 34.2L42.6 40.7L31.6 47.2L20.6 40.2Z" fill="#b8bc5a" stroke="#f0e8d8" stroke-width="0.900"></path><path d="M44.2 41.5L55.2 48.0L44.2 54.5L33.2 47.5Z" fill="#dcd4b4" stroke="#f0e8d8" stroke-width="0.900"></path><path d="M56.8 48.8L67.8 55.3L56.8 61.8L45.8 54.8Z" fill="#b8bc5a" stroke="#f0e8d8" stroke-width="0.900"></path><path d="M55 19L74 32L56 45L36 32Z" fill="#d8d4cc"></path><path d="M55 22.500L69 32L56 41.500L41 32Z" fill="#a8462a"></path><ellipse cx="55.500" cy="32" rx="5.500" ry="3.800" fill="#d8b070"></ellipse><ellipse cx="17" cy="30" rx="5" ry="6" fill="#f0a830"></ellipse><ellipse cx="17" cy="25.500" rx="5" ry="2" fill="#f8d070"></ellipse><ellipse cx="37" cy="8" rx="3.800" ry="2.600" fill="#e4dccc"></ellipse><ellipse cx="37" cy="8" rx="2" ry="1.300" fill="#a89878"></ellipse><ellipse cx="66" cy="8" rx="3.800" ry="2.600" fill="#e4dccc"></ellipse><ellipse cx="66" cy="8" rx="2" ry="1.300" fill="#a89878"></ellipse><ellipse cx="17" cy="19" rx="3.800" ry="2.600" fill="#e4dccc"></ellipse><ellipse cx="17" cy="19" rx="2" ry="1.300" fill="#a89878"></ellipse><ellipse cx="88" cy="18" rx="3.800" ry="2.600" fill="#e4dccc"></ellipse><ellipse cx="88" cy="18" rx="2" ry="1.300" fill="#a89878"></ellipse><ellipse cx="98" cy="27" rx="3.800" ry="2.600" fill="#e4dccc"></ellipse><ellipse cx="98" cy="27" rx="2" ry="1.300" fill="#a89878"></ellipse><ellipse cx="100" cy="38" rx="3.800" ry="2.600" fill="#e4dccc"></ellipse><ellipse cx="100" cy="38" rx="2" ry="1.300" fill="#a89878"></ellipse><ellipse cx="17" cy="41" rx="3.800" ry="2.600" fill="#e4dccc"></ellipse><ellipse cx="17" cy="41" rx="2" ry="1.300" fill="#a89878"></ellipse><ellipse cx="38" cy="57" rx="3.800" ry="2.600" fill="#e4dccc"></ellipse><ellipse cx="38" cy="57" rx="2" ry="1.300" fill="#a89878"></ellipse><ellipse cx="76" cy="56" rx="3.800" ry="2.600" fill="#e4dccc"></ellipse><ellipse cx="76" cy="56" rx="2" ry="1.300" fill="#a89878"></ellipse><ellipse cx="88" cy="44" rx="3.800" ry="2.600" fill="#e4dccc"></ellipse><ellipse cx="88" cy="44" rx="2" ry="1.300" fill="#a89878"></ellipse></g></svg><svg style="left:124.100px;top:498px" width="105.800" height="70.400" viewBox="0 0 106 70.400"><defs><clipPath id="c2"><rect width="106" height="70.400"></rect></clipPath><pattern id="mat" width="4.500" height="4.500" patternUnits="userSpaceOnUse"><rect width="4.500" height="4.500" fill="#a27656"></rect><path d="M0 0H4.500M0 0V4.500" stroke="#8a6044" stroke-width="0.700"></path></pattern><linearGradient id="matsh" x1="0" y1="0" x2="0" y2="1"><stop offset="0.5" stop-color="#000" stop-opacity="0"></stop><stop offset="1" stop-color="#000" stop-opacity=".55"></stop></linearGradient></defs><g clip-path="url(#c2)"><rect width="106" height="70.400" fill="#0c090c"></rect><path d="M0 0H91L101.500 59L40 72H0Z" fill="url(#mat)"></path><path d="M0 0H91L101.500 59L40 72H0Z" fill="url(#matsh)"></path><circle cx="13" cy="5" r="6.500" fill="#7a5a30"></circle><circle cx="11" cy="4" r="3" fill="#a8844a"></circle><circle cx="16" cy="20" r="3" fill="#a88450"></circle><circle cx="11" cy="27" r="2.500" fill="#9a7444"></circle><circle cx="24" cy="42" r="2" fill="#a88450"></circle><circle cx="15" cy="50" r="2.500" fill="#b08a58"></circle><path d="M27 15q1-6 5-9" stroke="#c02818" stroke-width="2.200" fill="none"></path><circle cx="89" cy="27" r="6" fill="none" stroke="#d8d8d8" stroke-width="1.500"></circle><circle cx="25.500" cy="39" r="6" fill="none" stroke="#a8a8a8" stroke-width="1.300"></circle><circle cx="58" cy="33.500" r="32" fill="#00000055"></circle><circle cx="57.400" cy="32" r="31.200" fill="#3a3a36"></circle><circle cx="57.400" cy="32" r="29.500" fill="#75736a"></circle><circle cx="57.400" cy="32" r="27.800" fill="#2a2420"></circle><circle cx="57.400" cy="32" r="25" fill="#a85c22"></circle><circle cx="53.2" cy="40.3" r="2.4" fill="#c03a1c"></circle><circle cx="60.6" cy="25.4" r="2.3" fill="#3a2416"></circle><circle cx="58.9" cy="38.9" r="2.0" fill="#6a3010"></circle><circle cx="70.6" cy="40.4" r="2.8" fill="#c03a1c"></circle><circle cx="75.4" cy="25.8" r="2.3" fill="#d88a30"></circle><circle cx="44.0" cy="25.0" r="3.1" fill="#d88a30"></circle><circle cx="49.2" cy="28.9" r="2.0" fill="#3a2416"></circle><circle cx="67.2" cy="41.0" r="2.8" fill="#e8b050"></circle><circle cx="71.9" cy="42.9" r="1.6" fill="#c03a1c"></circle><circle cx="51.7" cy="30.2" r="1.3" fill="#6a3010"></circle><circle cx="39.9" cy="32.4" r="2.7" fill="#a02a16"></circle><circle cx="43.5" cy="23.7" r="1.8" fill="#e8b050"></circle><circle cx="53.7" cy="20.7" r="2.3" fill="#3a2416"></circle><circle cx="43.3" cy="32.4" r="2.1" fill="#c87a34"></circle><circle cx="65.6" cy="31.0" r="2.0" fill="#4a6a24"></circle><circle cx="67.1" cy="45.7" r="1.3" fill="#e09a48"></circle><circle cx="73.2" cy="40.4" r="2.7" fill="#4a6a24"></circle><circle cx="49.8" cy="44.0" r="2.1" fill="#a02a16"></circle><circle cx="64.1" cy="35.1" r="1.7" fill="#8a2a3a"></circle><circle cx="54.4" cy="26.9" r="2.5" fill="#e09a48"></circle><circle cx="39.9" cy="22.7" r="2.0" fill="#8a2a3a"></circle><circle cx="42.6" cy="44.9" r="1.2" fill="#a02a16"></circle><circle cx="45.9" cy="46.8" r="2.1" fill="#6a3010"></circle><circle cx="58.4" cy="23.4" r="1.7" fill="#f0d090"></circle><circle cx="72.1" cy="23.6" r="1.5" fill="#f0d090"></circle><circle cx="35.9" cy="25.1" r="2.8" fill="#3a2416"></circle><circle cx="54.7" cy="47.2" r="1.9" fill="#f0d090"></circle><circle cx="66.4" cy="29.6" r="1.5" fill="#6a3010"></circle><circle cx="56.0" cy="29.8" r="2.8" fill="#e8b050"></circle><circle cx="57.3" cy="33.5" r="2.0" fill="#4a6a24"></circle><circle cx="47.0" cy="23.4" r="1.4" fill="#3a2416"></circle><circle cx="75.9" cy="26.0" r="2.6" fill="#a02a16"></circle><circle cx="74.5" cy="19.5" r="2.9" fill="#3a2416"></circle><circle cx="45.6" cy="41.5" r="1.4" fill="#e09a48"></circle><circle cx="48.9" cy="38.1" r="3.1" fill="#a02a16"></circle><circle cx="64.7" cy="43.9" r="1.3" fill="#d88a30"></circle><circle cx="41.3" cy="24.8" r="3.0" fill="#c87a34"></circle><circle cx="79.6" cy="35.6" r="2.4" fill="#e8b050"></circle><circle cx="41.8" cy="14.5" r="2.3" fill="#a02a16"></circle><circle cx="73.2" cy="47.4" r="3.1" fill="#a02a16"></circle><circle cx="44.1" cy="33.6" r="1.5" fill="#8a2a3a"></circle><circle cx="50.6" cy="42.3" r="2.8" fill="#e8b050"></circle><circle cx="46.6" cy="30.9" r="3.0" fill="#4a6a24"></circle><circle cx="68.1" cy="46.1" r="1.3" fill="#3a2416"></circle><circle cx="51.7" cy="50.4" r="1.4" fill="#e06a28"></circle><circle cx="34.7" cy="29.4" r="1.9" fill="#6a3010"></circle><circle cx="36.7" cy="27.7" r="1.8" fill="#6a3010"></circle><circle cx="41.3" cy="18.1" r="2.6" fill="#6a3010"></circle><circle cx="64.9" cy="11.6" r="2.6" fill="#6a3010"></circle><circle cx="62.6" cy="48.0" r="2.6" fill="#d88a30"></circle><circle cx="61.5" cy="16.0" r="1.6" fill="#c87a34"></circle><circle cx="72.9" cy="27.7" r="3.0" fill="#4a6a24"></circle><circle cx="71.3" cy="28.0" r="1.6" fill="#6a3010"></circle><circle cx="43.7" cy="34.6" r="2.1" fill="#c87a34"></circle><circle cx="66.3" cy="18.0" r="2.4" fill="#e09a48"></circle><circle cx="74.2" cy="41.9" r="2.9" fill="#8a2a3a"></circle><circle cx="57.4" cy="15.4" r="1.5" fill="#e09a48"></circle><circle cx="46.8" cy="50.7" r="3.0" fill="#f0d090"></circle><circle cx="37.3" cy="36.7" r="1.4" fill="#e8b050"></circle><circle cx="61.5" cy="39.5" r="1.5" fill="#a02a16"></circle><circle cx="60.6" cy="23.4" r="2.8" fill="#a02a16"></circle><circle cx="49.6" cy="20.1" r="2.2" fill="#e8b050"></circle><circle cx="78.7" cy="34.9" r="2.6" fill="#c03a1c"></circle><circle cx="34.5" cy="28.1" r="2.0" fill="#6a3010"></circle><circle cx="62.5" cy="22.2" r="1.7" fill="#e06a28"></circle><circle cx="36.4" cy="31.8" r="1.8" fill="#3a2416"></circle><circle cx="49.8" cy="36.2" r="2.9" fill="#4a6a24"></circle><circle cx="73.0" cy="20.3" r="2.7" fill="#3a2416"></circle><circle cx="37.2" cy="43.0" r="2.2" fill="#3a2416"></circle><circle cx="67.3" cy="46.0" r="2.9" fill="#e8b050"></circle><circle cx="41.0" cy="18.7" r="1.5" fill="#e8b050"></circle><circle cx="37.2" cy="35.4" r="2.3" fill="#4a6a24"></circle><circle cx="50.2" cy="16.1" r="2.1" fill="#c03a1c"></circle><circle cx="61.6" cy="28.2" r="1.6" fill="#d88a30"></circle><circle cx="59.8" cy="15.1" r="2.3" fill="#c03a1c"></circle><circle cx="39.8" cy="38.6" r="2.2" fill="#3a2416"></circle><circle cx="61.4" cy="44.0" r="2.2" fill="#a02a16"></circle><circle cx="45.5" cy="31.4" r="2.2" fill="#e06a28"></circle><circle cx="77.5" cy="21.4" r="1.6" fill="#a02a16"></circle><circle cx="62.9" cy="38.4" r="2.0" fill="#c03a1c"></circle><circle cx="49.9" cy="18.2" r="1.6" fill="#e06a28"></circle><circle cx="62.2" cy="9.8" r="1.5" fill="#8a2a3a"></circle><circle cx="48.4" cy="20.6" r="1.7" fill="#e8b050"></circle><circle cx="68.4" cy="29.7" r="3.0" fill="#f0d090"></circle><circle cx="64.7" cy="25.6" r="2.5" fill="#6a3010"></circle><circle cx="65.7" cy="45.4" r="2.2" fill="#4a6a24"></circle><circle cx="44.8" cy="38.8" r="1.4" fill="#4a6a24"></circle><circle cx="75.1" cy="34.2" r="2.0" fill="#d88a30"></circle><circle cx="44.5" cy="43.5" r="1.8" fill="#c03a1c"></circle><circle cx="74.9" cy="47.0" r="1.6" fill="#c03a1c"></circle><circle cx="68.2" cy="38.3" r="2.9" fill="#e8b050"></circle><circle cx="56.3" cy="40.6" r="2.0" fill="#e09a48"></circle><circle cx="62.5" cy="20.9" r="1.5" fill="#3a2416"></circle><circle cx="39.3" cy="23.4" r="1.4" fill="#d88a30"></circle><circle cx="60.5" cy="22.2" r="2.9" fill="#e06a28"></circle><circle cx="75.1" cy="24.8" r="2.7" fill="#c03a1c"></circle><circle cx="48.6" cy="24.9" r="1.7" fill="#c03a1c"></circle><circle cx="44.0" cy="36.0" r="2.3" fill="#e06a28"></circle><circle cx="53.8" cy="28.5" r="2.5" fill="#c03a1c"></circle><circle cx="69.5" cy="29.6" r="1.5" fill="#e06a28"></circle><circle cx="45.3" cy="19.4" r="1.6" fill="#a02a16"></circle><circle cx="47.3" cy="32.0" r="1.9" fill="#d88a30"></circle><circle cx="62.0" cy="31.8" r="1.2" fill="#3a2416"></circle><circle cx="47.5" cy="28.7" r="2.1" fill="#a02a16"></circle><circle cx="74.5" cy="45.4" r="2.0" fill="#a02a16"></circle><circle cx="35.7" cy="25.6" r="3.0" fill="#e06a28"></circle><circle cx="48.3" cy="10.0" r="1.9" fill="#8a2a3a"></circle><circle cx="56.2" cy="23.1" r="3.1" fill="#d88a30"></circle><circle cx="58.9" cy="29.6" r="2.4" fill="#e06a28"></circle><circle cx="52.3" cy="34.4" r="2.5" fill="#f0d090"></circle><circle cx="44" cy="16" r="3" fill="#f4f0ea"></circle></g></svg><svg style="left:238.900px;top:498px" width="106.200" height="70.400" viewBox="0 0 106 70.400"><defs><clipPath id="c3"><rect width="106" height="70.400"></rect></clipPath><linearGradient id="p3g" x1="0" y1="0" x2="1" y2="0"><stop offset="0" stop-color="#14161a"></stop><stop offset="0.5" stop-color="#24282e"></stop><stop offset="1" stop-color="#3c4248"></stop></linearGradient></defs><g clip-path="url(#c3)"><rect width="106" height="70.400" fill="url(#p3g)"></rect><ellipse cx="80" cy="0" rx="9" ry="3.500" fill="#8a8a86"></ellipse><path d="M100 6l6 2v20l-5-6z" fill="#6a3a36"></path><path d="M26 30q-20-2-22 10q0 12 24 14" fill="none" stroke="#86845e" stroke-width="2.600"></path><path d="M94 20q10-6 14-2" fill="none" stroke="#8a8650" stroke-width="2.400"></path><path d="M23 38q4 30 40 30q34 0 36-32z" fill="#23272d"></path><ellipse cx="60.700" cy="36.300" rx="38" ry="27" fill="#6a5a3a" transform="rotate(-6 60.700 36.300)"></ellipse><ellipse cx="61" cy="36.500" rx="36" ry="25" fill="#8a5a22" transform="rotate(-6 61 36.500)"></ellipse><path d="M60 12q30-2 36 16q2 10-6 20q-4-26-30-36z" fill="#7a6a2a"></path><ellipse cx="60" cy="40" rx="33" ry="21" fill="#a85a20" transform="rotate(-6 60 40)"></ellipse><circle cx="35.8" cy="46.0" r="3.2" fill="#e0a860"></circle><circle cx="30.6" cy="47.0" r="1.6" fill="#c86a2a"></circle><circle cx="34.0" cy="44.1" r="1.6" fill="#e0a860"></circle><circle cx="54.9" cy="47.1" r="3.0" fill="#3a2216"></circle><circle cx="87.7" cy="46.6" r="3.3" fill="#3a2216"></circle><circle cx="56.3" cy="27.5" r="2.6" fill="#c86a2a"></circle><circle cx="63.4" cy="43.3" r="3.1" fill="#d88438"></circle><circle cx="78.7" cy="44.3" r="2.2" fill="#7a3412"></circle><circle cx="33.4" cy="40.3" r="2.3" fill="#3a2216"></circle><circle cx="79.6" cy="49.4" r="2.1" fill="#c86a2a"></circle><circle cx="86.4" cy="41.6" r="2.8" fill="#4a2a1c"></circle><circle cx="59.1" cy="29.1" r="1.3" fill="#d88438"></circle><circle cx="60.0" cy="30.7" r="3.1" fill="#5a2a1a"></circle><circle cx="61.7" cy="43.0" r="2.7" fill="#7a3412"></circle><circle cx="65.4" cy="58.6" r="2.2" fill="#5a2a1a"></circle><circle cx="37.6" cy="48.5" r="1.6" fill="#3a2216"></circle><circle cx="56.9" cy="47.3" r="1.9" fill="#5a2a1a"></circle><circle cx="58.5" cy="35.8" r="1.7" fill="#b4561e"></circle><circle cx="79.1" cy="42.8" r="2.3" fill="#3a2216"></circle><circle cx="38.7" cy="37.6" r="1.6" fill="#d89a4a"></circle><circle cx="41.2" cy="47.4" r="2.1" fill="#7a3412"></circle><circle cx="86.8" cy="42.0" r="3.3" fill="#d88438"></circle><circle cx="48.3" cy="58.0" r="1.7" fill="#5a2a1a"></circle><circle cx="82.0" cy="41.6" r="2.5" fill="#c87a2e"></circle><circle cx="72.3" cy="41.4" r="1.8" fill="#d88438"></circle><circle cx="50.0" cy="50.6" r="1.4" fill="#b4561e"></circle><circle cx="64.3" cy="55.9" r="1.2" fill="#4a2a1c"></circle><circle cx="43.6" cy="50.7" r="3.3" fill="#e0a860"></circle><circle cx="63.6" cy="36.2" r="2.0" fill="#3a2216"></circle><circle cx="74.7" cy="56.1" r="3.0" fill="#7a3412"></circle><circle cx="56.1" cy="34.9" r="2.6" fill="#c86a2a"></circle><circle cx="68.0" cy="58.6" r="3.1" fill="#d88438"></circle><circle cx="63.9" cy="43.9" r="1.4" fill="#c86a2a"></circle><circle cx="72.7" cy="40.0" r="2.8" fill="#a8622a"></circle><circle cx="32.1" cy="50.2" r="2.3" fill="#c86a2a"></circle><circle cx="69.9" cy="55.6" r="1.4" fill="#7a3412"></circle><circle cx="33.2" cy="43.9" r="2.6" fill="#b4561e"></circle><circle cx="52.4" cy="58.9" r="1.6" fill="#c87a2e"></circle><circle cx="76.0" cy="46.9" r="1.7" fill="#c87a2e"></circle><circle cx="66.4" cy="51.8" r="2.5" fill="#d89a4a"></circle><circle cx="67.7" cy="45.7" r="2.2" fill="#4a2a1c"></circle><circle cx="43.8" cy="29.5" r="2.5" fill="#d89a4a"></circle><circle cx="32.8" cy="32.7" r="2.2" fill="#4a2a1c"></circle><circle cx="48.8" cy="25.2" r="1.2" fill="#3a2216"></circle><circle cx="65.2" cy="44.1" r="1.9" fill="#d89a4a"></circle><circle cx="66.5" cy="42.0" r="2.4" fill="#c87a2e"></circle><circle cx="79.5" cy="32.9" r="2.7" fill="#4a2a1c"></circle><circle cx="42.7" cy="54.0" r="3.2" fill="#5a2a1a"></circle><circle cx="63.1" cy="40.9" r="2.3" fill="#c87a2e"></circle><circle cx="44.4" cy="34.1" r="2.5" fill="#d88438"></circle><circle cx="66.4" cy="44.4" r="1.5" fill="#a8622a"></circle><circle cx="77.3" cy="31.5" r="2.1" fill="#d88438"></circle><circle cx="37.7" cy="45.2" r="2.4" fill="#c86a2a"></circle><circle cx="58.0" cy="38.9" r="2.5" fill="#e0a860"></circle><circle cx="88.0" cy="44.5" r="1.4" fill="#d88438"></circle><circle cx="46.4" cy="31.4" r="3.2" fill="#4a2a1c"></circle><circle cx="50.0" cy="56.1" r="1.6" fill="#d89a4a"></circle><circle cx="58.4" cy="31.5" r="3.2" fill="#e0a860"></circle><circle cx="71.8" cy="35.5" r="2.7" fill="#7a3412"></circle><circle cx="39.5" cy="30.0" r="2.9" fill="#7a3412"></circle><circle cx="72.0" cy="34.4" r="2.5" fill="#4a2a1c"></circle><circle cx="60.8" cy="48.4" r="2.0" fill="#c87a2e"></circle><circle cx="50.7" cy="25.0" r="1.8" fill="#d89a4a"></circle><circle cx="74.2" cy="50.0" r="3.2" fill="#5a2a1a"></circle><circle cx="41.5" cy="50.7" r="2.7" fill="#d88438"></circle><circle cx="49.9" cy="43.4" r="1.3" fill="#d88438"></circle><circle cx="83.2" cy="45.9" r="2.5" fill="#a8622a"></circle><circle cx="44.2" cy="31.1" r="2.6" fill="#5a2a1a"></circle><circle cx="53.3" cy="42.8" r="3.0" fill="#7a3412"></circle><circle cx="63.1" cy="26.2" r="3.4" fill="#b4561e"></circle><circle cx="34.8" cy="46.7" r="2.6" fill="#4a2a1c"></circle><circle cx="82.8" cy="38.2" r="1.6" fill="#e0a860"></circle><circle cx="57.0" cy="57.2" r="2.9" fill="#c86a2a"></circle><circle cx="55.1" cy="34.6" r="1.8" fill="#4a2a1c"></circle><circle cx="28.8" cy="37.7" r="2.3" fill="#d89a4a"></circle><circle cx="36.4" cy="51.9" r="3.2" fill="#b4561e"></circle><circle cx="33.2" cy="51.1" r="2.1" fill="#e0a860"></circle><circle cx="34.5" cy="46.1" r="3.2" fill="#5a2a1a"></circle><circle cx="34.2" cy="37.5" r="2.3" fill="#4a2a1c"></circle><circle cx="33.6" cy="45.3" r="1.7" fill="#3a2216"></circle><circle cx="67.7" cy="39.1" r="1.7" fill="#5a2a1a"></circle><circle cx="88.4" cy="39.8" r="2.4" fill="#4a2a1c"></circle><circle cx="56.0" cy="57.2" r="1.2" fill="#c86a2a"></circle><circle cx="75.9" cy="47.9" r="2.4" fill="#a8622a"></circle><circle cx="52.8" cy="42.2" r="3.0" fill="#b4561e"></circle><circle cx="52.8" cy="43.5" r="2.4" fill="#3a2216"></circle><circle cx="60.7" cy="35.4" r="1.5" fill="#c86a2a"></circle><circle cx="76.1" cy="34.4" r="2.7" fill="#e0a860"></circle><circle cx="78.5" cy="37.8" r="3.3" fill="#b4561e"></circle><circle cx="59.0" cy="30.1" r="2.4" fill="#c86a2a"></circle><circle cx="43.6" cy="32.0" r="3.1" fill="#c86a2a"></circle><circle cx="57.0" cy="56.7" r="3.3" fill="#d88438"></circle><circle cx="65.4" cy="58.0" r="3.3" fill="#c86a2a"></circle><circle cx="54.9" cy="54.6" r="2.1" fill="#b4561e"></circle><circle cx="33.9" cy="41.7" r="1.3" fill="#c87a2e"></circle><circle cx="38.5" cy="40.9" r="3.0" fill="#d88438"></circle><circle cx="64.8" cy="45.8" r="1.6" fill="#c86a2a"></circle><circle cx="29.2" cy="46.4" r="3.0" fill="#5a2a1a"></circle><circle cx="55.4" cy="54.3" r="1.5" fill="#5a2a1a"></circle><circle cx="82.4" cy="31.8" r="3.2" fill="#c86a2a"></circle><circle cx="52.4" cy="49.2" r="2.6" fill="#a8622a"></circle><circle cx="76.8" cy="53.5" r="1.3" fill="#7a3412"></circle><circle cx="59.9" cy="43.6" r="1.8" fill="#4a2a1c"></circle><circle cx="58.8" cy="54.7" r="2.3" fill="#d88438"></circle><circle cx="73.9" cy="51.0" r="1.8" fill="#7a3412"></circle><circle cx="49.3" cy="25.9" r="1.3" fill="#3a2216"></circle><circle cx="38.7" cy="48.8" r="1.6" fill="#7a3412"></circle><circle cx="72.9" cy="32.1" r="1.7" fill="#7a3412"></circle><circle cx="72.4" cy="30.7" r="3.1" fill="#7a3412"></circle><circle cx="79.1" cy="34.7" r="2.0" fill="#d89a4a"></circle><circle cx="51.0" cy="51.2" r="3.2" fill="#7a3412"></circle><circle cx="60.4" cy="34.2" r="1.4" fill="#7a3412"></circle><circle cx="64.2" cy="46.0" r="2.1" fill="#5a2a1a"></circle><circle cx="67.9" cy="31.8" r="2.9" fill="#d89a4a"></circle><circle cx="65.5" cy="55.6" r="3.0" fill="#b4561e"></circle><circle cx="65.8" cy="56.2" r="3.2" fill="#4a2a1c"></circle><circle cx="74.5" cy="50.5" r="2.9" fill="#c86a2a"></circle><circle cx="86.3" cy="41.9" r="3.0" fill="#e0a860"></circle><circle cx="62.7" cy="44.2" r="2.4" fill="#c86a2a"></circle><circle cx="75.8" cy="35.0" r="1.6" fill="#b4561e"></circle><ellipse cx="56" cy="23" rx="7" ry="4" fill="#2f5a22" transform="rotate(20 56 23)"></ellipse><ellipse cx="68" cy="33" rx="6" ry="4" fill="#2f5a22" transform="rotate(40 68 33)"></ellipse><ellipse cx="80" cy="30" rx="5" ry="3" fill="#2f5a22" transform="rotate(10 80 30)"></ellipse><ellipse cx="79" cy="44" rx="6" ry="3.5" fill="#2f5a22" transform="rotate(30 79 44)"></ellipse><ellipse cx="88" cy="36" rx="4" ry="2.5" fill="#2f5a22" transform="rotate(0 88 36)"></ellipse><path d="M66 16q8 6 16 22q6 6 14 10" stroke="#d87a3a" stroke-width="3" fill="none"></path><path d="M9 24L40 40" stroke="#e6cf88" stroke-width="1.600"></path><path d="M9 24L18.3 28.8" stroke="#f0dc9a" stroke-width="2.400"></path><path d="M12 21L46 42" stroke="#e6cf88" stroke-width="1.600"></path><path d="M12 21L22.2 27.3" stroke="#f0dc9a" stroke-width="2.400"></path><path d="M14 15L48 36" stroke="#e6cf88" stroke-width="1.600"></path><path d="M14 15L24.2 21.3" stroke="#f0dc9a" stroke-width="2.400"></path><path d="M22 13L54 32" stroke="#e6cf88" stroke-width="1.600"></path><path d="M22 13L31.6 18.7" stroke="#f0dc9a" stroke-width="2.400"></path><path d="M24 9L52 24" stroke="#e6cf88" stroke-width="1.600"></path><path d="M24 9L32.4 13.5" stroke="#f0dc9a" stroke-width="2.400"></path><path d="M27 5L50 18" stroke="#e6cf88" stroke-width="1.600"></path><path d="M27 5L33.9 8.9" stroke="#f0dc9a" stroke-width="2.400"></path><path d="M34 4L58 22" stroke="#e6cf88" stroke-width="1.600"></path><path d="M34 4L41.2 9.4" stroke="#f0dc9a" stroke-width="2.400"></path><path d="M38 3L56 14" stroke="#e6cf88" stroke-width="1.600"></path><path d="M38 3L43.4 6.3" stroke="#f0dc9a" stroke-width="2.400"></path></g></svg><div class="t" style="left:12px;top:560px;font-size:6.6px;color:#fff"><span class="cj">火锅</span></div><div class="t" style="left:127.5px;top:560px;font-size:6.6px;color:#fff"><span class="cj">干锅</span></div><div class="t" style="left:242px;top:560px;font-size:6.6px;color:#fff"><span class="cj">钵钵鸡</span></div><div class="t" style="left:-4.399999999999999px;top:599.700px;width:80px;text-align:center;font-size:10.7px;color:#fd4a5a"><span class="cj">首页</span></div><div class="t" style="left:66.3px;top:599.700px;width:80px;text-align:center;font-size:10.7px;color:#b4b4b4"><span class="cj">好店</span></div><div class="t" style="left:137px;top:599.700px;width:80px;text-align:center;font-size:10.7px;color:#b4b4b4"><span class="cj">一卡通</span></div><div class="t" style="left:208px;top:599.700px;width:80px;text-align:center;font-size:10.7px;color:#b4b4b4"><span class="cj">入驻</span></div><div class="t" style="left:278.4px;top:599.700px;width:80px;text-align:center;font-size:10.7px;color:#b4b4b4"><span class="cj">我的</span></div><svg style="left:24.6px;top:576px" width="22" height="22" viewBox="0 0 22 22" fill="none" stroke="#fd4a5a" stroke-width="1.3" stroke-linejoin="round" stroke-linecap="round"><path d="M2.5 10.5L11 3l8.5 7.5M4.5 10v9h4v-4.5a2.5 2.5 0 0 1 5 0V19h4v-9"></path></svg><svg style="left:95.3px;top:576px" width="22" height="22" viewBox="0 0 22 22" fill="none" stroke="#a9a9a9" stroke-width="1.3" stroke-linejoin="round" stroke-linecap="round"><path d="M4 4h14l2 5a2.7 2.7 0 0 1-6 0a3 3 0 0 1-6 0a2.7 2.7 0 0 1-6 0zM4 11v8h14v-8"></path></svg><svg style="left:166px;top:576px" width="22" height="22" viewBox="0 0 22 22" fill="none" stroke="#a9a9a9" stroke-width="1.3" stroke-linejoin="round" stroke-linecap="round"><rect x="3" y="5" width="16" height="13"></rect><rect x="5.5" y="8" width="4" height="3.5"></rect><path d="M12 8.5h5M12 11h3M5.500 14.500h11"></path></svg><svg style="left:237px;top:576px" width="22" height="22" viewBox="0 0 22 22" fill="none" stroke="#a9a9a9" stroke-width="1.3" stroke-linejoin="round" stroke-linecap="round"><path d="M6 3v17M4 20h4M6 4h11l-2.500 4.500l2.500 4.500H6"></path></svg><svg style="left:307.4px;top:576px" width="22" height="22" viewBox="0 0 22 22" fill="none" stroke="#a9a9a9" stroke-width="1.3" stroke-linejoin="round" stroke-linecap="round"><circle cx="11" cy="8" r="4.800"></circle><path d="M3 20c0.500-5 4-7.200 8-7.200s7.500 2.200 8 7.200"></path></svg>
</div>
<div class="a" style="left:395px;top:75px;width:215px;height:759px;background:#2e2e2e"></div>
<div class="a" style="left:395px;top:75px;width:215px;height:26px;background:#333"></div>
<div class="a" style="left:394.5px;top:75px;width:1.5px;height:759px;background:#292929"></div>
<div class="a" style="left:608.500px;top:101px;width:1.500px;height:733px;background:#262626"></div>
<svg style="left:401px;top:80px" width="16" height="16" viewBox="0 0 16 16" fill="none" stroke="#f0f0f0" stroke-width="1.2" stroke-linejoin="round"><path d="M5.5 3.500V2a.8.8 0 0 1 .8-.8h4.200L13.500 4v7.200a.8.8 0 0 1-.8.8H10.500"></path><path d="M2.500 4.800a.8.8 0 0 1 .8-.8h6.400a.8.8 0 0 1 .8.8v9a.8.8 0 0 1-.8.8H3.300a.8.8 0 0 1-.8-.8z"></path></svg>
<svg style="left:429px;top:80px" width="16" height="16" viewBox="0 0 16 16" fill="none" stroke="#9a9a9a" stroke-width="1.1"><circle cx="9.500" cy="6" r="4.300"></circle><path d="M6.500 9.200L1.500 14.500"></path></svg>
<svg style="left:456px;top:80px" width="16" height="16" viewBox="0 0 16 16" fill="none" stroke="#9a9a9a" stroke-width="1.1"><circle cx="5" cy="3" r="1.500"></circle><circle cx="5" cy="13" r="1.500"></circle><circle cx="11.500" cy="6" r="1.500"></circle><path d="M5 4.500v7M5 11c0-2.500 6.500-1.500 6.500-3.500"></path></svg>
<svg style="left:483px;top:80px" width="16" height="16" viewBox="0 0 16 16" fill="none" stroke="#9a9a9a" stroke-width="1.1"><rect x="1.500" y="5.500" width="4.500" height="4.500"></rect><rect x="6" y="5.500" width="4.500" height="4.500"></rect><rect x="1.500" y="10" width="4.500" height="4.500"></rect><rect x="6" y="10" width="4.500" height="4.500"></rect><rect x="10.500" y="1.500" width="4" height="4"></rect></svg>
<svg style="left:511px;top:80px" width="16" height="16" viewBox="0 0 16 16" fill="none" stroke="#9a9a9a" stroke-width="1.1"><rect x="2.500" y="2.500" width="11" height="11" rx="0.500"></rect><path d="M2.500 8h6V5M8.500 13.500V10.500h5"></path></svg>
<svg style="left:537px;top:80px" width="18" height="16" viewBox="0 0 18 16" fill="#9a9a9a"><path d="M1.500 8h12.500c.8 0 1.800-.3 2.500-.8c.2.800-.5 1.800-1.500 2c-.8 2.800-3.200 4.300-7 4.300C4.500 13.500 2 12 1.500 8z"></path><rect x="4" y="5.500" width="2" height="2"></rect><rect x="6.500" y="5.500" width="2" height="2"></rect><rect x="9" y="5.500" width="2" height="2"></rect><rect x="9" y="3" width="2" height="2"></rect></svg>
<svg style="left:588px;top:80px" width="16" height="16" viewBox="0 0 16 16" fill="none" stroke="#9a9a9a" stroke-width="1.1"><rect x="3" y="3.500" width="2.500" height="9"></rect><path d="M13.500 8H8M10 5.800L7.800 8l2.200 2.200"></path></svg>
<div class="t" style="left:412px;top:112px;font-size:9.700px;color:#d0d0d0"><span class="cj">资源管理器</span></div>
<div class="t" style="left:580px;top:107.800px;font-size:13px;color:#c8c8c8;letter-spacing:0.5px">···</div>
<div class="a" style="left:396px;top:130.5px;width:213px;height:37.5px;background:#383838"></div>
<div class="a" style="left:396px;top:149px;width:213px;height:1px;background:#343434"></div>
<div class="a" style="left:402.5px;top:137px;border:3px solid transparent;border-left:4px solid #c4c4c4;border-right:0"></div>
<div class="t" style="left:412.5px;top:136.400px;font-size:9.500px;font-weight:bold;color:#d4d4d4"><span class="cj">打开的编辑器</span></div>
<div class="a" style="left:401.5px;top:157.5px;border:3px solid transparent;border-top:4px solid #c4c4c4;border-bottom:0"></div>
<div class="t" style="left:412.5px;top:155.400px;font-size:9.500px;font-weight:bold;color:#d4d4d4">220<span class="cj">带直播</span></div>
<div class="a" style="left:413.0px;top:176.5px;border:3px solid transparent;border-top:4px solid #c4c4c4;border-bottom:0"></div>
<svg style="left:425.5px;top:172.5px" width="13" height="11" viewBox="0 0 13 11"><path d="M0.500 1.500a1 1 0 0 1 1-1H5l1.300 1.500H11.500a1 1 0 0 1 1 1V9.500a1 1 0 0 1-1 1H1.500a1 1 0 0 1-1-1z" fill="#8fa3ad"></path><path d="M2.800 4.500H13L11.300 10.500H0.800z" fill="#b4c4cc"></path></svg>
<div class="t" style="left:443.3px;top:173.7px;font-size:10.700px;color:#d6d6d6;letter-spacing:0.220px">common</div>
<div class="a" style="left:433px;top:191.29px;width:11px;height:11px;background:#f2c12e;border-radius:1px"></div><div class="t" style="left:436.5px;top:196.29px;font-size:5.5px;font-weight:bold;color:#6b5200">JS</div>
<div class="t" style="left:450.2px;top:192.48999999999998px;font-size:10.700px;color:#d6d6d6;letter-spacing:0.220px">main.js</div>
<svg style="left:432.5px;top:210.07999999999998px" width="12" height="11" viewBox="0 0 12 11"><path d="M2.200 0H12L10.300 8.500 6 11 1.800 9.300 2.300 7h2l-.2.900 2 .8 2.400-1.200.3-1.700H.8L1.300 3.700h8L9.500 2.200H1.700z" fill="#42a5f5"></path></svg>
<div class="t" style="left:450.2px;top:211.27999999999997px;font-size:10.700px;color:#d6d6d6;letter-spacing:0.220px">main.wxss</div>
<div class="a" style="left:433px;top:228.87px;width:11px;height:11px;background:#f2c12e;border-radius:1px"></div><div class="t" style="left:436.5px;top:233.87px;font-size:5.5px;font-weight:bold;color:#6b5200">JS</div>
<div class="t" style="left:450.2px;top:230.07px;font-size:10.700px;color:#d6d6d6;letter-spacing:0.220px">runtime.js</div>
<div class="a" style="left:433px;top:247.66px;width:11px;height:11px;background:#f2c12e;border-radius:1px"></div><div class="t" style="left:436.5px;top:252.66px;font-size:5.5px;font-weight:bold;color:#6b5200">JS</div>
<div class="t" style="left:450.2px;top:248.85999999999999px;font-size:10.700px;color:#d6d6d6;letter-spacing:0.220px">vendor.js</div>
<div class="a" style="left:414px;top:268.95px;border:3px solid transparent;border-left:4px solid #c4c4c4;border-right:0"></div>
<svg style="left:425.5px;top:266.45px" width="13" height="11" viewBox="0 0 13 11"><path d="M0.500 1.500a1 1 0 0 1 1-1H5l1.300 1.500H11.500a1 1 0 0 1 1 1V9.500a1 1 0 0 1-1 1H1.500a1 1 0 0 1-1-1z" fill="#c6d93e"></path><rect x="7" y="4.500" width="6" height="6" rx="1" fill="#e8f0a0"></rect></svg>
<div class="t" style="left:443.3px;top:267.65px;font-size:10.700px;color:#d6d6d6;letter-spacing:0.220px">components</div>
<div class="a" style="left:414px;top:287.74px;border:3px solid transparent;border-left:4px solid #c4c4c4;border-right:0"></div>
<svg style="left:425.5px;top:285.24px" width="13" height="11" viewBox="0 0 13 11"><path d="M0.500 1.500a1 1 0 0 1 1-1H5l1.300 1.500H11.500a1 1 0 0 1 1 1V9.500a1 1 0 0 1-1 1H1.500a1 1 0 0 1-1-1z" fill="#ff6a3d"></path><rect x="7" y="4.500" width="6" height="6" rx="1" fill="#ffd0c0"></rect></svg>
<div class="t" style="left:443.3px;top:286.44px;font-size:10.700px;color:#d6d6d6;letter-spacing:0.220px">pages</div>
<div class="a" style="left:414px;top:306.53px;border:3px solid transparent;border-left:4px solid #c4c4c4;border-right:0"></div>
<svg style="left:425.5px;top:304.03px" width="13" height="11" viewBox="0 0 13 11"><path d="M0.500 1.500a1 1 0 0 1 1-1H5l1.300 1.500H11.500a1 1 0 0 1 1 1V9.500a1 1 0 0 1-1 1H1.500a1 1 0 0 1-1-1z" fill="#90a4ae"></path></svg>
<div class="t" style="left:443.3px;top:305.22999999999996px;font-size:10.700px;color:#d6d6d6;letter-spacing:0.220px">pagesA</div>
<div class="a" style="left:414px;top:325.32px;border:3px solid transparent;border-left:4px solid #c4c4c4;border-right:0"></div>
<svg style="left:425.5px;top:322.82px" width="13" height="11" viewBox="0 0 13 11"><path d="M0.500 1.500a1 1 0 0 1 1-1H5l1.300 1.500H11.500a1 1 0 0 1 1 1V9.500a1 1 0 0 1-1 1H1.500a1 1 0 0 1-1-1z" fill="#fbc02d"></path><rect x="7" y="4.500" width="6" height="6" rx="1" fill="#ffe9a0"></rect></svg>
<div class="t" style="left:443.3px;top:324.02px;font-size:10.700px;color:#d6d6d6;letter-spacing:0.220px">static</div>
<div class="a" style="left:425.5px;top:341.61px;width:11px;height:11px;background:#f2c12e;border-radius:1px"></div><div class="t" style="left:429.0px;top:346.61px;font-size:5.5px;font-weight:bold;color:#6b5200">JS</div>
<div class="t" style="left:443.3px;top:342.81px;font-size:10.700px;color:#d6d6d6;letter-spacing:0.220px">app.js</div>
<div class="a" style="left:396px;top:356.5px;width:213px;height:18.800px;background:#404040"></div>
<svg style="left:424.0px;top:359.9px" width="14" height="12" viewBox="0 0 14 12" fill="none" stroke="#f7c443" stroke-width="1.350" stroke-linecap="round"><path d="M4.600 1C3.100 1 3.100 2 3.100 3V4.400C3.100 5.500 2.300 6 1.400 6C2.300 6 3.100 6.500 3.100 7.600V9C3.100 10 3.100 11 4.600 11M9.400 1C10.900 1 10.900 2 10.900 3V4.400C10.900 5.500 11.700 6 12.600 6C11.700 6 10.900 6.500 10.900 7.600V9C10.900 10 10.900 11 9.400 11"></path><g fill="#f7c443" stroke="none"><circle cx="5.300" cy="8.300" r="0.620"></circle><circle cx="7" cy="8.300" r="0.620"></circle><circle cx="8.700" cy="8.300" r="0.620"></circle></g></svg>
<div class="t" style="left:443.3px;top:361.59999999999997px;font-size:10.700px;color:#d6d6d6;letter-spacing:0.220px">app.json</div>
<svg style="left:425.0px;top:379.19px" width="12" height="11" viewBox="0 0 12 11"><path d="M2.200 0H12L10.300 8.500 6 11 1.800 9.300 2.300 7h2l-.2.900 2 .8 2.400-1.200.3-1.700H.8L1.300 3.700h8L9.500 2.200H1.700z" fill="#42a5f5"></path></svg>
<div class="t" style="left:443.3px;top:380.39px;font-size:10.700px;color:#d6d6d6;letter-spacing:0.220px">app.wxss</div>
<svg style="left:424.0px;top:397.48px" width="14" height="12" viewBox="0 0 14 12" fill="none" stroke="#f7c443" stroke-width="1.350" stroke-linecap="round"><path d="M4.600 1C3.100 1 3.100 2 3.100 3V4.400C3.100 5.500 2.300 6 1.400 6C2.300 6 3.100 6.500 3.100 7.600V9C3.100 10 3.100 11 4.600 11M9.400 1C10.900 1 10.900 2 10.900 3V4.400C10.900 5.500 11.700 6 12.600 6C11.700 6 10.900 6.500 10.900 7.600V9C10.900 10 10.900 11 9.400 11"></path><g fill="#f7c443" stroke="none"><circle cx="5.300" cy="8.300" r="0.620"></circle><circle cx="7" cy="8.300" r="0.620"></circle><circle cx="8.700" cy="8.300" r="0.620"></circle></g></svg>
<div class="t" style="left:443.3px;top:399.18px;font-size:10.700px;color:#d6d6d6;letter-spacing:0.220px">project.config.json</div>
<svg style="left:424.0px;top:416.27px" width="14" height="12" viewBox="0 0 14 12" fill="none" stroke="#f7c443" stroke-width="1.350" stroke-linecap="round"><path d="M4.600 1C3.100 1 3.100 2 3.100 3V4.400C3.100 5.500 2.300 6 1.400 6C2.300 6 3.100 6.500 3.100 7.600V9C3.100 10 3.100 11 4.600 11M9.400 1C10.900 1 10.900 2 10.900 3V4.400C10.900 5.500 11.700 6 12.600 6C11.700 6 10.900 6.500 10.900 7.600V9C10.900 10 10.900 11 9.400 11"></path><g fill="#f7c443" stroke="none"><circle cx="5.300" cy="8.300" r="0.620"></circle><circle cx="7" cy="8.300" r="0.620"></circle><circle cx="8.700" cy="8.300" r="0.620"></circle></g></svg>
<div class="t" style="left:443.3px;top:417.96999999999997px;font-size:10.700px;color:#d6d6d6;letter-spacing:0.220px">project.private.config.json</div>
<svg style="left:424.0px;top:435.06px" width="14" height="12" viewBox="0 0 14 12" fill="none" stroke="#f7c443" stroke-width="1.350" stroke-linecap="round"><path d="M4.600 1C3.100 1 3.100 2 3.100 3V4.400C3.100 5.500 2.300 6 1.400 6C2.300 6 3.100 6.500 3.100 7.600V9C3.100 10 3.100 11 4.600 11M9.400 1C10.900 1 10.900 2 10.900 3V4.400C10.900 5.500 11.700 6 12.600 6C11.700 6 10.900 6.500 10.900 7.600V9C10.900 10 10.900 11 9.400 11"></path><g fill="#f7c443" stroke="none"><circle cx="5.300" cy="8.300" r="0.620"></circle><circle cx="7" cy="8.300" r="0.620"></circle><circle cx="8.700" cy="8.300" r="0.620"></circle></g></svg>
<div class="t" style="left:443.3px;top:436.76px;font-size:10.700px;color:#d6d6d6;letter-spacing:0.220px">sitemap.json</div>
<div class="a" style="left:610px;top:75px;width:926px;height:26px;background:#363636"></div>
<div class="a" style="left:610px;top:101px;width:926px;height:502px;background:#2e2e2e"></div>
<div class="a" style="left:610px;top:75px;width:102px;height:26px;background:#383838"></div>
<div class="a" style="left:712px;top:75px;width:103px;height:26px;background:#2a2a2a"></div>
<div class="a" style="left:620px;top:82.5px;width:11px;height:11px;background:#f2c12e;border-radius:1px"></div><div class="t" style="left:623.5px;top:87.5px;font-size:5.5px;font-weight:bold;color:#6b5200">JS</div>
<div class="t" style="left:637px;top:84px;font-size:10.700px;letter-spacing:0.150px;color:#b9b9b9">vendor.js</div>
<svg style="left:720.5px;top:82px" width="14" height="12" viewBox="0 0 14 12" fill="none" stroke="#f7c443" stroke-width="1.350" stroke-linecap="round"><path d="M4.600 1C3.100 1 3.100 2 3.100 3V4.400C3.100 5.500 2.300 6 1.400 6C2.300 6 3.100 6.500 3.100 7.600V9C3.100 10 3.100 11 4.600 11M9.400 1C10.900 1 10.900 2 10.900 3V4.400C10.900 5.500 11.700 6 12.600 6C11.700 6 10.900 6.500 10.900 7.600V9C10.900 10 10.900 11 9.400 11"></path><g fill="#f7c443" stroke="none"><circle cx="5.300" cy="8.300" r="0.620"></circle><circle cx="7" cy="8.300" r="0.620"></circle><circle cx="8.700" cy="8.300" r="0.620"></circle></g></svg>
<div class="t" style="left:739.500px;top:84px;font-size:10.700px;letter-spacing:0.150px;color:#fff;font-style:italic">app.json</div>
<svg style="left:795.500px;top:84px" width="9" height="9" viewBox="0 0 9 9" stroke="#f0f0f0" stroke-width="1.2"><path d="M1 1l7 7M8 1l-7 7"></path></svg>
<div class="a" style="left:611px;top:119.500px;width:654px;height:2px;background:linear-gradient(#202020,#2e2e2e)"></div>
<svg style="left:616px;top:105px" width="14" height="12" viewBox="0 0 14 12" stroke="#a8a8a8" stroke-width="1" fill="none"><path d="M3 2.500h9.500M3 5h9.500M3 7.500h9.500M3 10h9.500M0.500 2.500h1.200M0.500 5h1.200M0.500 7.500h1.200M0.500 10h1.200"></path></svg>
<svg style="left:643px;top:104.500px" width="11" height="13" viewBox="0 0 11 13" stroke="#c0c0c0" stroke-width="1.1" fill="none"><path d="M1.500 1h8v11l-4-3.500-4 3.500z"></path></svg>
<svg style="left:668px;top:106px" width="13" height="10" viewBox="0 0 13 10" stroke="#c0c0c0" stroke-width="1.1" fill="none"><path d="M12 5H1.500M5.500 1L1.500 5l4 4"></path></svg>
<svg style="left:692px;top:106px" width="13" height="10" viewBox="0 0 13 10" stroke="#5a5a5a" stroke-width="1.1" fill="none"><path d="M1 5h10.500M7.500 1l4 4-4 4"></path></svg>
<svg style="left:717.5px;top:104.8px" width="14" height="12" viewBox="0 0 14 12" fill="none" stroke="#f7c443" stroke-width="1.350" stroke-linecap="round"><path d="M4.600 1C3.100 1 3.100 2 3.100 3V4.400C3.100 5.500 2.300 6 1.400 6C2.300 6 3.100 6.500 3.100 7.600V9C3.100 10 3.100 11 4.600 11M9.400 1C10.900 1 10.900 2 10.900 3V4.400C10.900 5.500 11.700 6 12.600 6C11.700 6 10.900 6.500 10.900 7.600V9C10.900 10 10.900 11 9.400 11"></path><g fill="#f7c443" stroke="none"><circle cx="5.300" cy="8.300" r="0.620"></circle><circle cx="7" cy="8.300" r="0.620"></circle><circle cx="8.700" cy="8.300" r="0.620"></circle></g></svg>
<div class="t" style="left:736px;top:105.500px;font-size:10.700px;color:#b4b4b4">app.json <span style="font-size:11px">&gt;</span> ...</div>
<div class="a" style="left:611px;top:121px;width:654px;height:481.500px;overflow:hidden">
<div class="t mono" style="left:0;top:3.70px;width:34.500px;text-align:right;font-size:11px;color:#5c5c5c">1</div>
<div class="t mono" style="left:57.3px;top:3.70px;font-size:11px;white-space:pre"><span style="color:#ffd700">{</span></div>
<div class="t mono" style="left:0;top:19.95px;width:34.500px;text-align:right;font-size:11px;color:#5c5c5c">2</div>
<div class="t mono" style="left:57.3px;top:19.95px;font-size:11px;white-space:pre">  <span style="color:#d8d8d8">"pages"</span><span style="color:#d4d4d4">: </span><span style="color:#da70d6">[</span></div>
<div class="t mono" style="left:0;top:36.20px;width:34.500px;text-align:right;font-size:11px;color:#5c5c5c">3</div>
<div class="t mono" style="left:57.3px;top:36.20px;font-size:11px;white-space:pre">    <span style="color:#d4d4d4">"</span><span style="color:#e8705f">pages/mainPages/index/index</span><span style="color:#d4d4d4">"</span><span style="color:#9cdcfe">,</span></div>
<div class="t mono" style="left:0;top:52.45px;width:34.500px;text-align:right;font-size:11px;color:#5c5c5c">4</div>
<div class="t mono" style="left:57.3px;top:52.45px;font-size:11px;white-space:pre">    <span style="color:#d4d4d4">"</span><span style="color:#e8705f">pages/mainPages/index/diypage</span><span style="color:#d4d4d4">"</span><span style="color:#9cdcfe">,</span></div>
<div class="t mono" style="left:0;top:68.70px;width:34.500px;text-align:right;font-size:11px;color:#5c5c5c">5</div>
<div class="t mono" style="left:57.3px;top:68.70px;font-size:11px;white-space:pre">    <span style="color:#d4d4d4">"</span><span style="color:#e8705f">pages/mainPages/memberCard/memberCard</span><span style="color:#d4d4d4">"</span><span style="color:#9cdcfe">,</span></div>
<div class="t mono" style="left:0;top:84.95px;width:34.500px;text-align:right;font-size:11px;color:#5c5c5c">6</div>
<div class="t mono" style="left:57.3px;top:84.95px;font-size:11px;white-space:pre">    <span style="color:#d4d4d4">"</span><span style="color:#e8705f">pages/mainPages/userCenter/userCenter</span><span style="color:#d4d4d4">"</span><span style="color:#9cdcfe">,</span></div>
<div class="t mono" style="left:0;top:101.20px;width:34.500px;text-align:right;font-size:11px;color:#5c5c5c">7</div>
<div class="t mono" style="left:57.3px;top:101.20px;font-size:11px;white-space:pre">    <span style="color:#d4d4d4">"</span><span style="color:#e8705f">pages/mainPages/store/index</span><span style="color:#d4d4d4">"</span><span style="color:#9cdcfe">,</span></div>
<div class="t mono" style="left:0;top:117.45px;width:34.500px;text-align:right;font-size:11px;color:#5c5c5c">8</div>
<div class="t mono" style="left:57.3px;top:117.45px;font-size:11px;white-space:pre">    <span style="color:#d4d4d4">"</span><span style="color:#e8705f">pages/mainPages/Settled/Settled</span><span style="color:#d4d4d4">"</span><span style="color:#9cdcfe">,</span></div>
<div class="t mono" style="left:0;top:133.70px;width:34.500px;text-align:right;font-size:11px;color:#5c5c5c">9</div>
<div class="t mono" style="left:57.3px;top:133.70px;font-size:11px;white-space:pre">    <span style="color:#d4d4d4">"</span><span style="color:#e8705f">pages/mainPages/sendInformation/sendInformation</span><span style="color:#d4d4d4">"</span><span style="color:#9cdcfe">,</span></div>
<div class="t mono" style="left:0;top:149.95px;width:34.500px;text-align:right;font-size:11px;color:#5c5c5c">10</div>
<div class="t mono" style="left:57.3px;top:149.95px;font-size:11px;white-space:pre">    <span style="color:#d4d4d4">"</span><span style="color:#e8705f">pages/mainPages/memberCard/interests</span><span style="color:#d4d4d4">"</span><span style="color:#9cdcfe">,</span></div>
<div class="t mono" style="left:0;top:166.20px;width:34.500px;text-align:right;font-size:11px;color:#5c5c5c">11</div>
<div class="t mono" style="left:57.3px;top:166.20px;font-size:11px;white-space:pre">    <span style="color:#d4d4d4">"</span><span style="color:#e8705f">pages/mainPages/userset/userset</span><span style="color:#d4d4d4">"</span><span style="color:#9cdcfe">,</span></div>
<div class="t mono" style="left:0;top:182.45px;width:34.500px;text-align:right;font-size:11px;color:#5c5c5c">12</div>
<div class="t mono" style="left:57.3px;top:182.45px;font-size:11px;white-space:pre">    <span style="color:#d4d4d4">"</span><span style="color:#e8705f">pages/mainPages/headline/index</span><span style="color:#d4d4d4">"</span><span style="color:#9cdcfe">,</span></div>
<div class="t mono" style="left:0;top:198.70px;width:34.500px;text-align:right;font-size:11px;color:#5c5c5c">13</div>
<div class="t mono" style="left:57.3px;top:198.70px;font-size:11px;white-space:pre">    <span style="color:#d4d4d4">"</span><span style="color:#e8705f">pages/mainPages/store/list</span><span style="color:#d4d4d4">"</span><span style="color:#9cdcfe">,</span></div>
<div class="t mono" style="left:0;top:214.95px;width:34.500px;text-align:right;font-size:11px;color:#5c5c5c">14</div>
<div class="t mono" style="left:57.3px;top:214.95px;font-size:11px;white-space:pre">    <span style="color:#d4d4d4">"</span><span style="color:#e8705f">pages/mainPages/businessDetails/businessDetails</span><span style="color:#d4d4d4">"</span><span style="color:#9cdcfe">,</span></div>
<div class="t mono" style="left:0;top:231.20px;width:34.500px;text-align:right;font-size:11px;color:#5c5c5c">15</div>
<div class="t mono" style="left:57.3px;top:231.20px;font-size:11px;white-space:pre">    <span style="color:#d4d4d4">"</span><span style="color:#e8705f">pages/mainPages/login/login</span><span style="color:#d4d4d4">"</span><span style="color:#9cdcfe">,</span></div>
<div class="t mono" style="left:0;top:247.45px;width:34.500px;text-align:right;font-size:11px;color:#5c5c5c">16</div>
<div class="t mono" style="left:57.3px;top:247.45px;font-size:11px;white-space:pre">    <span style="color:#d4d4d4">"</span><span style="color:#e8705f">pages/mainPages/login/minLogin</span><span style="color:#d4d4d4">"</span><span style="color:#9cdcfe">,</span></div>
<div class="t mono" style="left:0;top:263.70px;width:34.500px;text-align:right;font-size:11px;color:#5c5c5c">17</div>
<div class="t mono" style="left:57.3px;top:263.70px;font-size:11px;white-space:pre">    <span style="color:#d4d4d4">"</span><span style="color:#e8705f">pages/mainPages/memberCard/getMembership/getMembership</span><span style="color:#d4d4d4">"</span><span style="color:#9cdcfe">,</span></div>
<div class="t mono" style="left:0;top:279.95px;width:34.500px;text-align:right;font-size:11px;color:#5c5c5c">18</div>
<div class="t mono" style="left:57.3px;top:279.95px;font-size:11px;white-space:pre">    <span style="color:#d4d4d4">"</span><span style="color:#e8705f">pages/mainPages/orderWrite/orderWrite</span><span style="color:#d4d4d4">"</span><span style="color:#9cdcfe">,</span></div>
<div class="t mono" style="left:0;top:296.20px;width:34.500px;text-align:right;font-size:11px;color:#5c5c5c">19</div>
<div class="t mono" style="left:57.3px;top:296.20px;font-size:11px;white-space:pre">    <span style="color:#d4d4d4">"</span><span style="color:#e8705f">pages/mainPages/poster/poster</span><span style="color:#d4d4d4">"</span><span style="color:#9cdcfe">,</span></div>
<div class="t mono" style="left:0;top:312.45px;width:34.500px;text-align:right;font-size:11px;color:#5c5c5c">20</div>
<div class="t mono" style="left:57.3px;top:312.45px;font-size:11px;white-space:pre">    <span style="color:#d4d4d4">"</span><span style="color:#e8705f">pages/mainPages/headline/message</span><span style="color:#d4d4d4">"</span><span style="color:#9cdcfe">,</span></div>
<div class="t mono" style="left:0;top:328.70px;width:34.500px;text-align:right;font-size:11px;color:#5c5c5c">21</div>
<div class="t mono" style="left:57.3px;top:328.70px;font-size:11px;white-space:pre">    <span style="color:#d4d4d4">"</span><span style="color:#e8705f">pages/mainPages/headline/headlineDetail</span><span style="color:#d4d4d4">"</span><span style="color:#9cdcfe">,</span></div>
<div class="t mono" style="left:0;top:344.95px;width:34.500px;text-align:right;font-size:11px;color:#5c5c5c">22</div>
<div class="t mono" style="left:57.3px;top:344.95px;font-size:11px;white-space:pre">    <span style="color:#d4d4d4">"</span><span style="color:#e8705f">pages/mainPages/realCard/realCard</span><span style="color:#d4d4d4">"</span><span style="color:#9cdcfe">,</span></div>
<div class="t mono" style="left:0;top:361.20px;width:34.500px;text-align:right;font-size:11px;color:#5c5c5c">23</div>
<div class="t mono" style="left:57.3px;top:361.20px;font-size:11px;white-space:pre">    <span style="color:#d4d4d4">"</span><span style="color:#e8705f">pages/mainPages/notOpen/notOpen</span><span style="color:#d4d4d4">"</span></div>
<div class="t mono" style="left:0;top:377.45px;width:34.500px;text-align:right;font-size:11px;color:#5c5c5c">24</div>
<div class="t mono" style="left:57.3px;top:377.45px;font-size:11px;white-space:pre">  <span style="color:#da70d6">]</span><span style="color:#d4d4d4">,</span></div>
<div class="t mono" style="left:0;top:393.70px;width:34.500px;text-align:right;font-size:11px;color:#5c5c5c">25</div>
<div class="t mono" style="left:57.3px;top:393.70px;font-size:11px;white-space:pre">  <span style="color:#d8d8d8">"subPackages"</span><span style="color:#d4d4d4">: </span><span style="color:#da70d6">[</span></div>
<div class="t mono" style="left:0;top:409.95px;width:34.500px;text-align:right;font-size:11px;color:#5c5c5c">26</div>
<div class="t mono" style="left:57.3px;top:409.95px;font-size:11px;white-space:pre">    <span style="color:#3f9cf0">{</span></div>
<div class="t mono" style="left:0;top:426.20px;width:34.500px;text-align:right;font-size:11px;color:#5c5c5c">27</div>
<div class="t mono" style="left:57.3px;top:426.20px;font-size:11px;white-space:pre">      <span style="color:#d8d8d8">"root"</span><span style="color:#d4d4d4">: "</span><span style="color:#e8705f">pages/subPages/livePlayer</span><span style="color:#d4d4d4">"</span><span style="color:#9cdcfe">,</span></div>
<div class="t mono" style="left:0;top:442.45px;width:34.500px;text-align:right;font-size:11px;color:#5c5c5c">28</div>
<div class="t mono" style="left:57.3px;top:442.45px;font-size:11px;white-space:pre">      <span style="color:#d8d8d8">"pages"</span><span style="color:#d4d4d4">: </span><span style="color:#ffd700">[</span></div>
<div class="t mono" style="left:0;top:458.70px;width:34.500px;text-align:right;font-size:11px;color:#5c5c5c">29</div>
<div class="t mono" style="left:57.3px;top:458.70px;font-size:11px;white-space:pre">        <span style="color:#d4d4d4">"</span><span style="color:#e8705f">livePlayer</span><span style="color:#d4d4d4">"</span></div>
<div class="t mono" style="left:0;top:474.95px;width:34.500px;text-align:right;font-size:11px;color:#5c5c5c">30</div>
<div class="t mono" style="left:57.3px;top:474.95px;font-size:11px;white-space:pre">      <span style="color:#ffd700">]</span><span style="color:#d4d4d4">,</span></div>
<svg style="left:42px;top:3.50px" width="9" height="6" viewBox="0 0 9 6" fill="none" stroke="#c0c0c0" stroke-width="1.1"><path d="M0.500 0.800L4.500 4.800 8.500 0.800"></path></svg>
<svg style="left:42px;top:19.75px" width="9" height="6" viewBox="0 0 9 6" fill="none" stroke="#c0c0c0" stroke-width="1.1"><path d="M0.500 0.800L4.500 4.800 8.500 0.800"></path></svg>
<svg style="left:42px;top:393.50px" width="9" height="6" viewBox="0 0 9 6" fill="none" stroke="#c0c0c0" stroke-width="1.1"><path d="M0.500 0.800L4.500 4.800 8.500 0.800"></path></svg>
<svg style="left:42px;top:409.75px" width="9" height="6" viewBox="0 0 9 6" fill="none" stroke="#c0c0c0" stroke-width="1.1"><path d="M0.500 0.800L4.500 4.800 8.500 0.800"></path></svg>
<svg style="left:42px;top:442.25px" width="9" height="6" viewBox="0 0 9 6" fill="none" stroke="#c0c0c0" stroke-width="1.1"><path d="M0.500 0.800L4.500 4.800 8.500 0.800"></path></svg>
<div class="a" style="left:57.3px;top:15.2px;width:1px;height:487.5px;background:#505050"></div>
<div class="a" style="left:70.5px;top:31.4px;width:1px;height:341.2px;background:#454545"></div>
<div class="a" style="left:70.5px;top:405.1px;width:1px;height:97.5px;background:#454545"></div>
<div class="a" style="left:83.7px;top:421.4px;width:1px;height:81.2px;background:#454545"></div>
<div class="a" style="left:96.9px;top:453.9px;width:1px;height:16.2px;background:#454545"></div>
<div class="a" style="left:56.8px;top:0px;width:7.500px;height:15.500px;border:1px solid #7a7a7a"></div>
</div>
<svg style="left:816px;top:130px" width="66" height="56" viewBox="0 0 66 56"><defs><filter id="bl1" x="-30%" y="-30%" width="160%" height="160%"><feGaussianBlur stdDeviation="1.200"></feGaussianBlur></filter><linearGradient id="smg" x1="0" y1="0" x2="0" y2="1"><stop offset="0" stop-color="#4a3432"></stop><stop offset="0.45" stop-color="#6c443c"></stop><stop offset="1" stop-color="#7e4c42"></stop></linearGradient></defs><path d="M8 21.500Q30 18.500 52 21.500L51 35Q43 43 32 50Q21 43 9.500 35Z" fill="#2e2e2e" filter="url(#bl1)"></path><path d="M11 24.500Q30 22 50 24.500L48 34Q41 41 32 48.500Q23 41 13 34Z" fill="url(#smg)" opacity="0.800" filter="url(#bl1)"></path><path d="M17 26L27 41M45 26L37 41M25 25L30 43M38 25L34 43" stroke="#2e2e2e" stroke-width="2" opacity="0.400" filter="url(#bl1)"></path></svg>
<div class="a" style="left:605px;top:130px;width:3.500px;height:38px;background:#3a3a3a"></div>
<div class="a" style="left:1122px;top:120px;width:143px;height:27.500px;background:#262626;box-shadow:0 1px 4px rgba(0,0,0,.5)"></div>
<div class="a" style="left:1122px;top:120px;width:2px;height:27.500px;background:#454545"></div>
<svg style="left:1129.500px;top:128.500px" width="7" height="10" viewBox="0 0 7 10" fill="none" stroke="#c8c8c8" stroke-width="1.1"><path d="M1 0.800L5.500 5 1 9.200"></path></svg>
<div class="a" style="left:1140.500px;top:122.500px;width:125px;height:21px;background:#3c3c3c"></div>
<div class="t" style="left:1143.500px;top:128px;font-size:10.700px;letter-spacing:0.200px;color:#d4d4d4">https</div>
<div class="a" style="left:610px;top:602.500px;width:655px;height:25.500px;background:#2e2e2e"></div>
<div class="a" style="left:610px;top:602px;width:655px;height:1px;background:#3a3a3a"></div>
<div class="t" style="left:627px;top:612.200px;font-size:9.6px;color:#e8e8e8"><span class="cj">调试器</span></div>
<div class="a" style="left:627px;top:626.500px;width:29px;height:1px;background:#e0e0e0"></div>
<div class="a" style="left:662px;top:608.500px;width:38.500px;height:15.500px;border-radius:7.500px;background:#444"></div>
<div class="t" style="left:662px;top:612.500px;width:39px;text-align:center;font-size:9.6px;letter-spacing:-0.200px;color:#e8e8e8">59, 516</div>
<div class="t" style="left:717px;top:612.200px;font-size:9.6px;color:#a0a0a0"><span class="cj">问题</span></div>
<div class="t" style="left:753px;top:612.200px;font-size:9.6px;color:#a0a0a0"><span class="cj">输出</span></div>
<div class="t" style="left:789px;top:612.200px;font-size:9.6px;color:#a0a0a0"><span class="cj">终端</span></div>
<div class="t" style="left:825px;top:612.200px;font-size:9.6px;color:#a0a0a0"><span class="cj">代码质量</span></div>
<div class="a" style="left:1095px;top:604px;width:71px;height:17.500px;background:#e9e9e9;border:1px solid #f8f8f8;border-radius:1.500px;box-shadow:1px 1px 3px rgba(0,0,0,.6)"></div>
<div class="t" style="left:1095px;top:607.500px;width:71px;text-align:center;font-size:10.300px;color:#555"><span class="cj">截图</span>(Alt + A)</div>
<div class="a" style="left:610px;top:628px;width:655px;height:22.500px;background:#292a2d"></div>
<div class="a" style="left:610px;top:650px;width:655px;height:1px;background:#3c3d40"></div>
<svg style="left:617.500px;top:633.500px" width="13" height="12" viewBox="0 0 13 12" fill="none" stroke="#8a8a8a" stroke-width="1"><path d="M11.500 4V1H1v9.500h3.500" stroke-dasharray="none"></path><path d="M5.500 4.500l6 2.300-2.600 1 2 2.500-1 .8-2-2.500-1.600 2z" fill="#8a8a8a" stroke="none"></path></svg>
<div class="a" style="left:639px;top:633px;width:1px;height:12.500px;background:#48494c"></div>
<div class="a" style="left:691px;top:628px;width:56.500px;height:22px;background:#000"></div>
<div class="t" style="left:655px;top:636px;font-size:10.400px;color:#e8e8e8;letter-spacing:-0.100px">Wxml</div>
<div class="t" style="left:701px;top:636px;font-size:10.400px;color:#f4f4f4;letter-spacing:-0.100px">Console</div>
<div class="t" style="left:757.5px;top:636px;font-size:10.400px;color:#e0e0e0;letter-spacing:-0.100px">Sources</div>
<div class="t" style="left:813px;top:636px;font-size:10.400px;color:#e0e0e0;letter-spacing:-0.100px">Network</div>
<div class="t" style="left:872px;top:636px;font-size:10.400px;color:#e0e0e0;letter-spacing:-0.100px">Performance</div>
<div class="t" style="left:949.5px;top:636px;font-size:10.400px;color:#e0e0e0;letter-spacing:-0.100px">Memory</div>
<div class="t" style="left:1007.5px;top:636px;font-size:10.400px;color:#e0e0e0;letter-spacing:-0.100px">AppData</div>
<div class="t" style="left:1067.5px;top:636px;font-size:10.400px;color:#e0e0e0;letter-spacing:-0.100px">Storage</div>
<div class="t" style="left:1122.5px;top:636px;font-size:10.400px;color:#e0e0e0;letter-spacing:-0.100px">Security</div>
<div class="t" style="left:1187px;top:636px;font-size:10.400px;color:#e0e0e0;letter-spacing:-0.100px">Sensor</div>
<div class="t" style="left:1237.5px;top:636px;font-size:10.400px;color:#e0e0e0;letter-spacing:-0.100px">Mock</div>
<div class="a" style="left:610px;top:651px;width:655px;height:23px;background:#292a2d"></div>
<div class="a" style="left:610px;top:673.500px;width:655px;height:1px;background:#3c3d40"></div>
<svg style="left:616.500px;top:656.500px" width="14" height="12" viewBox="0 0 14 12" fill="none" stroke="#9a9a9a" stroke-width="1"><rect x="0.500" y="0.500" width="13" height="11"></rect><path d="M4 0.500v11"></path><path d="M6.500 3.500l4 2.500-4 2.500z" fill="#9a9a9a" stroke="none"></path></svg>
<svg style="left:642px;top:656.500px" width="12" height="12" viewBox="0 0 12 12" fill="none" stroke="#9a9a9a" stroke-width="1.2"><circle cx="6" cy="6" r="4.800"></circle><path d="M2.600 2.600l6.800 6.800"></path></svg>
<div class="a" style="left:663.500px;top:655px;width:1px;height:14px;background:#48494c"></div>
<div class="t" style="left:671px;top:659px;font-size:10.200px;color:#e4e4e4">appservice (#3)</div>
<div class="a" style="left:774.500px;top:660px;border:3px solid transparent;border-top:5.500px solid #9a9a9a;border-bottom:0"></div>
<div class="a" style="left:788.500px;top:655px;width:1px;height:14px;background:#48494c"></div>
<svg style="left:797px;top:657px" width="15" height="11" viewBox="0 0 15 11"><path d="M0.500 5.500C3 0.500 12 0.500 14.500 5.500C12 10.500 3 10.500 0.500 5.500z" fill="#9a9a9a"></path><circle cx="7.500" cy="5.500" r="2.600" fill="#292a2d"></circle><circle cx="7.500" cy="5.500" r="1.300" fill="#9a9a9a"></circle></svg>
<div class="a" style="left:820.500px;top:655px;width:1px;height:14px;background:#48494c"></div>
<div class="a" style="left:826px;top:654px;width:206px;height:18px;background:#242424;border:1px solid #4a4a4a"></div>
<div class="t" style="left:830.500px;top:659.300px;font-size:10.200px;color:#d8d8d8">Filter</div>
<div class="t" style="left:1038.500px;top:659px;font-size:10.200px;color:#d8d8d8">Default levels <span style="font-size:7.500px;color:#9a9a9a;position:relative;top:-1px">▼</span></div>
<div class="a" style="left:610px;top:674px;width:655px;height:160px;background:#242424;overflow:hidden" id="con">
<div class="a" style="left:0;top:-9px;width:655px;height:21px;background:#332b00;border-top:1px solid #665500;border-bottom:1px solid #665500"></div>
<div class="a" style="left:0;top:11.5px;width:655px;height:29.5px;background:#332b00;border-top:1px solid #665500;border-bottom:1px solid #665500"></div>
<div class="a" style="left:0;top:40.5px;width:655px;height:29.5px;background:#332b00;border-top:1px solid #665500;border-bottom:1px solid #665500"></div>
<div class="a" style="left:0;top:69.5px;width:655px;height:29.5px;background:#332b00;border-top:1px solid #665500;border-bottom:1px solid #665500"></div>
<div class="a" style="left:0;top:117.5px;width:655px;height:1px;background:#3a3a3a"></div>
<div class="a" style="left:0;top:135.5px;width:655px;height:30.5px;background:#332b00;border-top:1px solid #665500;border-bottom:1px solid #665500"></div>
<div class="t mono" style="left:20.799999999999955px;top:4.529709940470639e-14px;font-size:9.38px;letter-spacing:0.000px;color:#f5eed0;white-space:pre;"><u>plate/haodiantoutiao.wxss:1</u>:684)</div>
<svg style="left:4.5px;top:15.299999999999955px" width="11" height="10" viewBox="0 0 11 10"><path d="M5.500 0.300L10.800 9.700H0.200z" fill="#f5bd00"></path><path d="M5.500 3.300v3.400" stroke="#332b00" stroke-width="1.200"></path><circle cx="5.500" cy="8.100" r="0.700" fill="#332b00"></circle></svg>
<div class="t mono" style="left:20.799999999999955px;top:17.099999999999955px;font-size:9.38px;letter-spacing:0.000px;color:#f5eed0;white-space:pre;">[pages/mainPages/index/diypage] Some selectors are not allowed in component wxss, including tag name selectors, ID selectors</div>
<div class="t mono" style="left:20.799999999999955px;top:29.199999999999978px;font-size:9.38px;letter-spacing:0.000px;color:#f5eed0;white-space:pre;"><u>-parser/libs/trees.wxss:1</u>:203)</div>
<svg style="left:4.5px;top:44.200000000000045px" width="11" height="10" viewBox="0 0 11 10"><path d="M5.500 0.300L10.800 9.700H0.200z" fill="#f5bd00"></path><path d="M5.500 3.300v3.400" stroke="#332b00" stroke-width="1.200"></path><circle cx="5.500" cy="8.100" r="0.700" fill="#332b00"></circle></svg>
<div class="t mono" style="left:20.799999999999955px;top:46.00000000000004px;font-size:9.38px;letter-spacing:0.000px;color:#f5eed0;white-space:pre;">[pages/mainPages/index/diypage] Some selectors are not allowed in component wxss, including tag name selectors, ID selectors</div>
<div class="t mono" style="left:20.799999999999955px;top:58.09999999999995px;font-size:9.38px;letter-spacing:0.000px;color:#f5eed0;white-space:pre;"><u>abs/v-tabs.wxss:1</u>:98)</div>
<svg style="left:4.5px;top:73.20000000000005px" width="11" height="10" viewBox="0 0 11 10"><path d="M5.500 0.300L10.800 9.700H0.200z" fill="#f5bd00"></path><path d="M5.500 3.300v3.400" stroke="#332b00" stroke-width="1.200"></path><circle cx="5.500" cy="8.100" r="0.700" fill="#332b00"></circle></svg>
<div class="t mono" style="left:20.799999999999955px;top:75.00000000000004px;font-size:9.38px;letter-spacing:0.000px;color:#f5eed0;white-space:pre;">[pages/mainPages/index/diypage] Some selectors are not allowed in component wxss, including tag name selectors, ID selectors</div>
<div class="t mono" style="left:20.799999999999955px;top:87.09999999999995px;font-size:9.38px;letter-spacing:0.000px;color:#f5eed0;white-space:pre;"><u>plate/diypages.wxss:2</u>:22014)</div>
<div class="a" style="left:22px;top:106px;border:3px solid transparent;border-left:4.500px solid #8a8a8a;border-right:0"></div>
<div class="t mono" style="left:30px;top:105.3px;font-size:9.38px;letter-spacing:0.000px;color:#d8d8d8;white-space:pre;font-style:italic">{errno: <span style="color:#9980ff">0</span>, message: <span style="color:#f28b54">"</span><span style="color:#f28b54;font-family:'Liberation Sans',sans-serif;font-size:9px"><span class="cj">代理</span></span><span style="color:#f28b54">id"</span>, data: {…}} <span style="font-style:normal">"</span></div>
<div class="t" style="left:264.5px;top:103.5px;font-size:10.200px;color:#f28b54"><span class="cj">接口请求的代理城市</span><span style="color:#d8d8d8" class="mono">"</span></div>
<div class="a" style="left:22px;top:124.39999999999998px;border:3px solid transparent;border-left:4.500px solid #8a8a8a;border-right:0"></div>
<div class="t mono" style="left:30px;top:123.69999999999997px;font-size:9.38px;letter-spacing:0.000px;color:#d8d8d8;white-space:pre;font-style:italic">{errno: <span style="color:#9980ff">0</span>, message: <span style="color:#f28b54">"</span><span style="color:#f28b54;font-family:'Liberation Sans',sans-serif;font-size:9px"><span class="cj">代理</span></span><span style="color:#f28b54">id"</span>, data: {…}} <span style="font-style:normal">"</span></div>
<div class="t" style="left:264.5px;top:121.89999999999998px;font-size:10.200px;color:#f28b54"><span class="cj">接口请求的代理城市</span><span style="color:#d8d8d8" class="mono">"</span></div>
<svg style="left:4.5px;top:139.89999999999998px" width="11" height="10" viewBox="0 0 11 10"><path d="M5.500 0.300L10.800 9.700H0.200z" fill="#f5bd00"></path><path d="M5.500 3.300v3.400" stroke="#332b00" stroke-width="1.200"></path><circle cx="5.500" cy="8.100" r="0.700" fill="#332b00"></circle></svg>
<div class="a" style="left:22px;top:142.39999999999998px;border:3px solid transparent;border-left:4.500px solid #8a8a8a;border-right:0"></div>
<div class="t mono" style="left:29px;top:141.7px;font-size:9.38px;letter-spacing:0.000px;color:#f5eed0;white-space:pre;">[Component] property "pageId" of "components/template/tabBar" received type-uncompatible value: expected &lt;String&gt; but get</div>
<div class="t mono" style="left:20.799999999999955px;top:153.7px;font-size:9.38px;letter-spacing:0.000px;color:#f5eed0;white-space:pre;">null value. Use empty string instead.</div>
</div>
<div class="a" style="left:1265px;top:75px;width:271px;height:759px;background:#2e2e2e;box-shadow:-2px 0 6px rgba(0,0,0,.35);clip-path:inset(0 0 0 -12px)"></div>
<div class="t" style="left:1268.4px;top:97px;width:80px;text-align:center;font-size:11.200px;color:#d8d8d8;font-weight:normal"><span class="cj">基本信息</span></div>
<div class="t" style="left:1354px;top:97px;width:80px;text-align:center;font-size:11.200px;color:#d8d8d8;font-weight:normal"><span class="cj">性能分析</span></div>
<div class="t" style="left:1439.4px;top:97px;width:80px;text-align:center;font-size:11.200px;color:#ffffff;font-weight:normal"><span class="cj">本地设置</span></div>
<div class="a" style="left:1445.500px;top:121px;width:68.500px;height:1px;background:#707070"></div>
<div class="t" style="left:1293px;top:155.800px;font-size:11.200px;color:#c8c8c8"><span class="cj">调试基础库</span></div>
<div class="a" style="left:1351.500px;top:155px;width:11.500px;height:11.500px;border-radius:6px;border:1px solid #a0a0a0"></div><div class="t" style="left:1351.500px;top:156.800px;width:11.500px;text-align:center;font-size:8.500px;color:#a8a8a8">?</div>
<div class="a" style="left:1412px;top:151.400px;width:102.500px;height:18.500px;border-radius:2.500px;background:#4b4b4b"></div>
<div class="t" style="left:1432px;top:155.500px;font-size:10.600px;color:#f4f4f4;font-weight:bold;letter-spacing:-0.300px">2.27.3</div>
<div class="t" style="left:1478.500px;top:155.500px;font-size:10.400px;color:#c8c8c8;letter-spacing:-0.200px">1.75%</div>
<div class="a" style="left:1519px;top:151.400px;width:30px;height:18.500px;border-radius:2.500px;background:#4b4b4b"></div>
<div class="t" style="left:1293px;top:186.500px;font-size:9.300px;color:#b0b0b0"><span class="cj">该基础库支持微信客户端</span></div>
<div class="t" style="left:1293px;top:205.0px;font-size:9.300px;color:#b0b0b0">iOS</div>
<div class="t" style="left:1506.500px;top:205.0px;font-size:9.300px;color:#b0b0b0;letter-spacing:-0.200px">8.0.28 <span class="cj">及</span></div>
<div class="a" style="left:1293px;top:218.0px;width:243px;height:1px;background:#383838"></div>
<div class="t" style="left:1293px;top:226.2px;font-size:9.300px;color:#b0b0b0">Android</div>
<div class="t" style="left:1506.500px;top:226.2px;font-size:9.300px;color:#b0b0b0;letter-spacing:-0.200px">8.0.28 <span class="cj">及</span></div>
<div class="a" style="left:1293px;top:239.2px;width:243px;height:1px;background:#383838"></div>
<div class="t" style="left:1293px;top:248.0px;font-size:9.300px;color:#b0b0b0">MacOS</div>
<div class="a" style="left:1293px;top:261.0px;width:243px;height:1px;background:#383838"></div>
<div class="t" style="left:1293px;top:269.0px;font-size:9.300px;color:#b0b0b0">Windows</div>
<div class="a" style="left:1293px;top:282.0px;width:243px;height:1px;background:#383838"></div>
<div class="a" style="left:1293.200px;top:311.40000000000003px;width:12.400px;height:12.400px;border-radius:2px;background:#0cbe74"></div>
<svg style="left:1293.200px;top:311.40000000000003px" width="12.400" height="12.400" viewBox="0 0 12.400 12.400" fill="none" stroke="#fff" stroke-width="1.300"><path d="M3 6.300l2.400 2.500 4.200-5.200"></path></svg>
<div class="t" style="left:1314px;top:313.0px;font-size:11.100px;color:#d8d8d8">ES6 <span class="cj">转</span> ES5</div>
<div class="a" style="left:1293.200px;top:336.8px;width:12.400px;height:12.400px;border-radius:2px;background:#0cbe74"></div>
<svg style="left:1293.200px;top:336.8px" width="12.400" height="12.400" viewBox="0 0 12.400 12.400" fill="none" stroke="#fff" stroke-width="1.300"><path d="M3 6.300l2.400 2.500 4.200-5.200"></path></svg>
<div class="t" style="left:1314px;top:338.4px;font-size:11.100px;color:#d8d8d8"><span class="cj">增强编译</span></div>
<div class="a" style="left:1293.200px;top:362.8px;width:12.400px;height:12.400px;border-radius:2px;background:#0cbe74"></div>
<svg style="left:1293.200px;top:362.8px" width="12.400" height="12.400" viewBox="0 0 12.400 12.400" fill="none" stroke="#fff" stroke-width="1.300"><path d="M3 6.300l2.400 2.500 4.200-5.200"></path></svg>
<div class="t" style="left:1314px;top:364.4px;font-size:11.100px;color:#d8d8d8"><span class="cj">上传代码时样式自动补全</span></div>
<div class="a" style="left:1293.200px;top:388.5px;width:12.400px;height:12.400px;border-radius:2px;background:#0cbe74"></div>
<svg style="left:1293.200px;top:388.5px" width="12.400" height="12.400" viewBox="0 0 12.400 12.400" fill="none" stroke="#fff" stroke-width="1.300"><path d="M3 6.300l2.400 2.500 4.200-5.200"></path></svg>
<div class="t" style="left:1314px;top:390.09999999999997px;font-size:11.100px;color:#d8d8d8"><span class="cj">上传代码时自动压缩样式文件</span></div>
<div class="a" style="left:1293.200px;top:413.8px;width:12.400px;height:12.400px;border-radius:2px;background:#0cbe74"></div>
<svg style="left:1293.200px;top:413.8px" width="12.400" height="12.400" viewBox="0 0 12.400 12.400" fill="none" stroke="#fff" stroke-width="1.300"><path d="M3 6.300l2.400 2.500 4.200-5.200"></path></svg>
<div class="t" style="left:1314px;top:415.4px;font-size:11.100px;color:#d8d8d8"><span class="cj">上传代码时自动压缩脚本文件（</span>Terser<span class="cj">）</span></div>
<div class="a" style="left:1293.200px;top:439.8px;width:12.400px;height:12.400px;border-radius:2px;background:#0cbe74"></div>
<svg style="left:1293.200px;top:439.8px" width="12.400" height="12.400" viewBox="0 0 12.400 12.400" fill="none" stroke="#fff" stroke-width="1.300"><path d="M3 6.300l2.400 2.500 4.200-5.200"></path></svg>
<div class="t" style="left:1314px;top:441.4px;font-size:11.100px;color:#d8d8d8"><span class="cj">上传代码时自动压缩</span>wxml<span class="cj">文件</span></div>
<div class="a" style="left:1293.200px;top:465.3px;width:12.400px;height:12.400px;border-radius:2px;background:#0cbe74"></div>
<svg style="left:1293.200px;top:465.3px" width="12.400" height="12.400" viewBox="0 0 12.400 12.400" fill="none" stroke="#fff" stroke-width="1.300"><path d="M3 6.300l2.400 2.500 4.200-5.200"></path></svg>
<div class="t" style="left:1314px;top:466.9px;font-size:11.100px;color:#d8d8d8"><span class="cj">上传时过滤无依赖文件</span></div>
<div class="a" style="left:1293.200px;top:490.8px;width:12.400px;height:12.400px;border-radius:2px;background:#474747;border:1px solid #565656"></div>
<div class="t" style="left:1314px;top:492.4px;font-size:11.100px;color:#d8d8d8"><span class="cj">上传时进行代码保护</span></div>
<div class="a" style="left:1293.200px;top:516.4px;width:12.400px;height:12.400px;border-radius:2px;background:#474747;border:1px solid #565656"></div>
<div class="t" style="left:1314px;top:518.0px;font-size:11.100px;color:#d8d8d8"><span class="cj">自动运行体验评分</span></div>
<div class="a" style="left:1293.200px;top:542.5999999999999px;width:12.400px;height:12.400px;border-radius:2px;background:#0cbe74"></div>
<svg style="left:1293.200px;top:542.5999999999999px" width="12.400" height="12.400" viewBox="0 0 12.400 12.400" fill="none" stroke="#fff" stroke-width="1.300"><path d="M3 6.300l2.400 2.500 4.200-5.200"></path></svg>
<div class="t" style="left:1314px;top:544.1999999999999px;font-size:11.100px;color:#d8d8d8"><span class="cj">不校验合法域名、</span>web-view<span class="cj">（业务域名）、</span>TLS <span class="cj">版</span></div>
<div class="a" style="left:1293.200px;top:584.8px;width:12.400px;height:12.400px;border-radius:2px;background:#474747;border:1px solid #565656"></div>
<div class="t" style="left:1314px;top:586.4px;font-size:11.100px;color:#d8d8d8"><span class="cj">预览及真机调试时主包、分包体积上限调整为</span>4M</div>
<div class="a" style="left:1293.200px;top:610.5px;width:12.400px;height:12.400px;border-radius:2px;background:#474747;border:1px solid #565656"></div>
<div class="t" style="left:1314px;top:612.1px;font-size:11.100px;color:#d8d8d8"><span class="cj">启用数据预拉取</span></div>
<div class="a" style="left:1293.200px;top:636.4px;width:12.400px;height:12.400px;border-radius:2px;background:#0cbe74"></div>
<svg style="left:1293.200px;top:636.4px" width="12.400" height="12.400" viewBox="0 0 12.400 12.400" fill="none" stroke="#fff" stroke-width="1.300"><path d="M3 6.300l2.400 2.500 4.200-5.200"></path></svg>
<div class="t" style="left:1314px;top:638.0px;font-size:11.100px;color:#d8d8d8"><span class="cj">启用代码自动热重载（不支持</span> json <span class="cj">文件</span>)</div>
<div class="a" style="left:1293.200px;top:661.8px;width:12.400px;height:12.400px;border-radius:2px;background:#0cbe74"></div>
<svg style="left:1293.200px;top:661.8px" width="12.400" height="12.400" viewBox="0 0 12.400 12.400" fill="none" stroke="#fff" stroke-width="1.300"><path d="M3 6.300l2.400 2.500 4.200-5.200"></path></svg>
<div class="t" style="left:1314px;top:663.4px;font-size:11.100px;color:#d8d8d8"><span class="cj">启用多核心编译</span></div>
<div class="a" style="left:1293.200px;top:687.3px;width:12.400px;height:12.400px;border-radius:2px;background:#0cbe74"></div>
<svg style="left:1293.200px;top:687.3px" width="12.400" height="12.400" viewBox="0 0 12.400 12.400" fill="none" stroke="#fff" stroke-width="1.300"><path d="M3 6.300l2.400 2.500 4.200-5.200"></path></svg>
<div class="t" style="left:1314px;top:688.9px;font-size:11.100px;color:#d8d8d8"><span class="cj">启用独立域进行调试</span></div>
<div class="a" style="left:1293.200px;top:713.0999999999999px;width:12.400px;height:12.400px;border-radius:2px;background:#474747;border:1px solid #565656"></div>
<div class="t" style="left:1314px;top:714.6999999999999px;font-size:11.100px;color:#d8d8d8"><span class="cj">启用自定义处理命令</span></div>
<div class="t" style="left:1314px;top:560.500px;font-size:11.100px;color:#d8d8d8"><span class="cj">本以及</span> HTTPS <span class="cj">证书</span></div>
</body></html>
